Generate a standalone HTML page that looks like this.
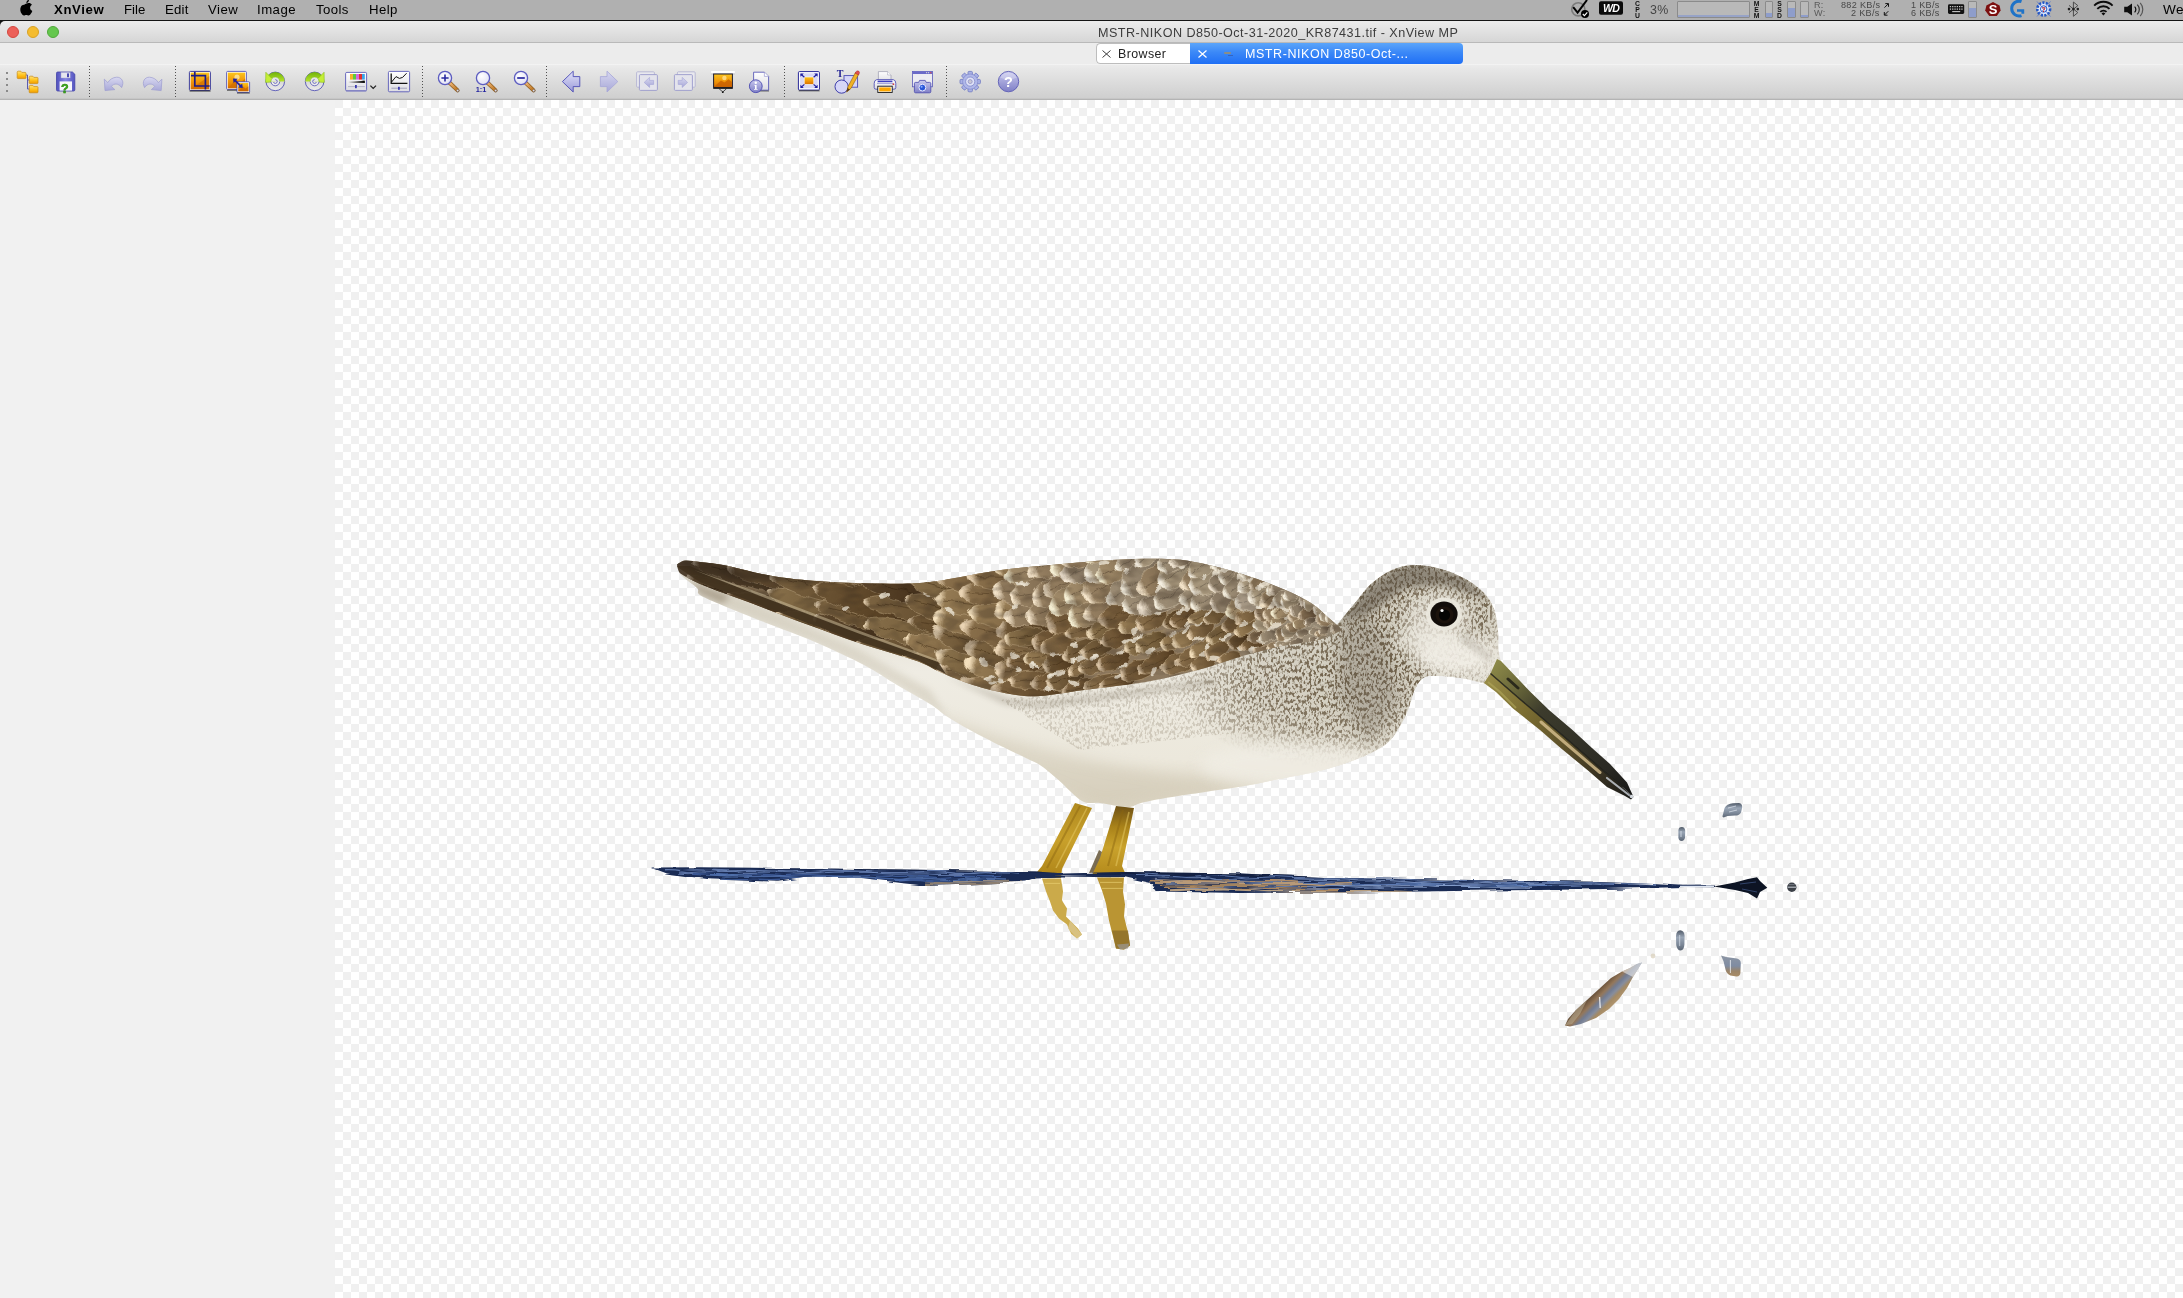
<!DOCTYPE html>
<html><head><meta charset="utf-8">
<style>
*{margin:0;padding:0;box-sizing:border-box}
html,body{width:2183px;height:1298px;overflow:hidden;background:#f1f1f1;font-family:"Liberation Sans",sans-serif;}
.abs{position:absolute}
#menubar{position:absolute;left:0;top:0;width:2183px;height:20px;background:#b0b0b0;}
#menuline{position:absolute;left:0;top:20px;width:2183px;height:1.3px;background:#141414;}
.mi,.st,.vt,#title,#tb1,#tb2,#pct{will-change:transform}
.mi{position:absolute;top:0.5px;height:18px;line-height:18px;font-size:13.2px;color:#000;white-space:nowrap;}
.st{position:absolute;white-space:nowrap;color:#484848;font-size:9.1px;line-height:9px;height:9px;letter-spacing:.3px}
.vt{position:absolute;width:7px;text-align:center;font-size:6.8px;line-height:6px;font-weight:bold;color:#111}
.bar{position:absolute;top:0.5px;height:17px;border:1px solid #8b8b8b;background:#b9b9b9;border-radius:1px;overflow:hidden}
.bar i{position:absolute;left:0;right:0;bottom:0;background:#8e9dcb;display:block}
#titlebar{position:absolute;left:0;top:21px;width:2183px;height:22px;background:linear-gradient(#ececec,#d6d6d6);border-bottom:1px solid #b9b9b9;}
.tl{position:absolute;top:5px;width:12px;height:12px;border-radius:50%;}
#title{position:absolute;left:1098px;top:5.3px;height:14px;line-height:14px;font-size:12.6px;letter-spacing:.47px;color:#3c3c3c;white-space:nowrap;}
#tabrow{position:absolute;left:0;top:43px;width:2183px;height:21px;background:#ececec;}
#toolbar{position:absolute;left:0;top:64px;width:2183px;height:36px;background:linear-gradient(#f6f6f6 0,#ebebeb 1.5px,#e6e6e6 6px,#cfcfcf 34px,#b4b4b4 35.5px,#b0b0b0 36px);}
#left{position:absolute;left:0;top:100px;width:335px;height:1198px;background:#f1f1f1;}
#canvas{position:absolute;left:335px;top:100px;width:1848px;height:1198px;background-color:#fff;
 background-image:conic-gradient(#fff 25%,#f0f0f0 0 50%,#fff 0 75%,#f0f0f0 0);background-size:16px 16px;background-position:0 0;}
svg{position:absolute;left:0;top:0;overflow:visible}
</style></head><body>
<div id="menubar">
 <svg style="left:20px;top:0" width="14" height="17" viewBox="0 0 14 17"><path fill="#000" d="M9.0 0 C8.9 1.0 8.5 1.7 8.0 2.2 C7.5 2.7 6.9 3.0 6.3 2.9 C6.3 2.0 6.7 1.2 7.2 0.7 C7.5 0.4 7.9 0.15 8.3 0 Z M6.4 3.6 C7.0 3.6 7.8 3.0 8.9 3.0 C10.1 3.0 11.2 3.6 11.9 4.7 C10.6 5.5 10.1 6.6 10.1 7.8 C10.1 9.3 11.0 10.4 12.3 10.9 C12.0 11.9 11.5 12.9 10.8 13.8 C10.2 14.7 9.5 15.5 8.6 15.5 C7.7 15.5 7.4 14.9 6.3 14.9 C5.2 14.9 4.8 15.5 4.0 15.5 C3.1 15.6 2.4 14.7 1.7 13.8 C0.5 12.1 -0.3 9.2 0.8 6.9 C1.4 5.6 2.7 4.7 4.0 4.7 C5.0 4.7 5.9 3.6 6.4 3.6 Z"/></svg>
 <div class="mi" id="m0" style="left:54px;font-weight:bold;letter-spacing:.62px">XnView</div>
 <div class="mi" id="m1" style="left:124px;letter-spacing:.03px">File</div>
 <div class="mi" id="m2" style="left:165px;letter-spacing:.24px">Edit</div>
 <div class="mi" id="m3" style="left:208px;letter-spacing:.46px">View</div>
 <div class="mi" id="m4" style="left:257px;letter-spacing:.47px">Image</div>
 <div class="mi" id="m5" style="left:316px;letter-spacing:.4px">Tools</div>
 <div class="mi" id="m6" style="left:368.5px;letter-spacing:.44px">Help</div>
 <div class="mi" id="m7" style="left:2162.5px;font-size:13.6px;letter-spacing:.3px">We</div>
 <!-- status items -->
 <svg width="2183" height="20" viewBox="0 0 2183 20">
  <circle cx="1578.3" cy="9.3" r="6.6" fill="none" stroke="#7b7b7b" stroke-width="1.6"/>
  <path d="M1573.2 7.2 L1577.6 12.6 L1587 0" fill="none" stroke="#000" stroke-width="2"/>
  <circle cx="1585" cy="14" r="4" fill="#000"/><path d="M1582.8 14 L1584.4 15.7 L1587.3 12.3" fill="none" stroke="#fff" stroke-width="1.1"/>
  <rect x="1599" y="1.2" width="24" height="13.5" rx="2" fill="#0b0b0b"/>
  <text x="1611" y="11.8" font-size="10.5" font-weight="bold" font-style="italic" fill="#fff" text-anchor="middle" font-family="Liberation Sans" letter-spacing="-0.8">WD</text>
  <!-- keyboard -->
  <rect x="1948" y="4.2" width="16.2" height="9.8" rx="1.4" fill="#111"/>
  <path d="M1949.8 6.6h12.8M1949.8 9.1h12.8" stroke="#c8c8c8" stroke-width="1.1" stroke-dasharray="1.3 1"/>
  <path d="M1952.2 11.6h8" stroke="#c8c8c8" stroke-width="1.1"/>
  <!-- S hex -->
  <path d="M1993 2 L1999.6 5.6 L2000.6 10.5 L1996.8 16 L1989.2 16 L1985.2 10.5 L1986.4 5.6 Z" fill="#7c0f0f"/>
  <text x="1993" y="14" font-size="13" font-weight="bold" fill="#fff" text-anchor="middle" font-family="Liberation Sans">S</text>
  <!-- G -->
  <path d="M2021.5 1.6 A7.4 7.4 0 1 0 2021.5 15.6" fill="none" stroke="#1e73c8" stroke-width="3"/>
  <path d="M2017 9.2 H2024.2 V13.8 H2021.4 V11.8 H2017 Z" fill="#1e73c8"/>
  <!-- gear blue -->
  <circle cx="2043.7" cy="9" r="6.4" fill="#dfe8fb" stroke="#2457c5" stroke-width="2.6" stroke-dasharray="2.2 1.3"/>
  <circle cx="2043.7" cy="9" r="3.2" fill="#fff" stroke="#2457c5" stroke-width="1"/>
  <path d="M2037 1.5 L2050.5 16.5 M2050.5 1.5 L2037 16.5" stroke="#4a6fd0" stroke-width=".7"/>
  <text x="2043.7" y="11.6" font-size="7" font-weight="bold" fill="#c22" text-anchor="middle" font-family="Liberation Sans">?</text>
  <!-- bluetooth -->
  <path d="M2069 5.4 L2077.8 12.6 L2073.4 16.3 L2073.4 2 L2077.8 5.6 L2069 12.8" fill="none" stroke="#4c4c4c" stroke-width="1"/>
  <circle cx="2069" cy="9.1" r="1.3" fill="#222"/><circle cx="2073.4" cy="9.1" r="1.3" fill="#222"/><circle cx="2077.8" cy="9.1" r="1.3" fill="#222"/>
  <!-- wifi -->
  <g fill="none" stroke="#0c0c0c" stroke-width="1.9">
   <path d="M2094.2 5.6 A13 13 0 0 1 2112.6 5.6"/>
   <path d="M2097.3 8.8 A8.6 8.6 0 0 1 2109.5 8.8"/>
   <path d="M2100.3 11.9 A4.3 4.3 0 0 1 2106.5 11.9"/>
  </g>
  <path d="M2103.4 15.6 L2101.5 13.4 A2.8 2.8 0 0 1 2105.3 13.4 Z" fill="#0c0c0c"/>
  <!-- volume -->
  <path d="M2124.2 6.8 H2127.3 L2132 3.4 V15.6 L2127.3 12.2 H2124.2 Z" fill="#0c0c0c"/>
  <g fill="none" stroke="#0c0c0c" stroke-width="1.2"><path d="M2134.6 6.6 A4 4 0 0 1 2134.6 12.4"/><path d="M2137.3 4.6 A7 7 0 0 1 2137.3 14.4" stroke="#333"/><path d="M2140.2 2.8 A10 10 0 0 1 2140.2 16.2" stroke="#555"/></g>
  <!-- arrows -->
  <path d="M1884.5 7.6 L1888.3 3.8 M1885.3 3.6 H1888.5 V6.8" fill="none" stroke="#111" stroke-width="1"/>
  <path d="M1888.3 11.2 L1884.5 15 M1884.3 12 V15.2 H1887.5" fill="none" stroke="#111" stroke-width="1"/>
 </svg>
 <div class="vt" style="left:1634px;top:1px">C<br>P<br>U</div>
 <div class="vt" style="left:1753px;top:1px">M<br>E<br>M</div>
 <div class="vt" style="left:1776px;top:1px">S<br>S<br>D</div>
 <div class="abs" id="pct" style="left:1650px;top:3px;font-size:12.4px;line-height:15px;color:#444;letter-spacing:.4px">3%</div>
 <div class="bar" style="left:1677px;width:73px"><i style="height:2px;opacity:.8"></i></div>
 <div class="bar" style="left:1764.5px;width:8.5px"><i style="height:4px"></i></div>
 <div class="bar" style="left:1787.3px;width:8.5px"><i style="height:9px"></i></div>
 <div class="bar" style="left:1800.4px;width:8.5px"><i style="height:1.5px"></i></div>
 <div class="bar" style="left:1968.4px;width:8.5px"><i style="height:9px"></i></div>
 <div class="st" style="left:1813.5px;top:0.5px;color:#5a5a5a">R:</div>
 <div class="st" style="left:1813.5px;top:9px;color:#5a5a5a">W:</div>
 <div class="st" style="right:303px;top:0.5px">882 KB/s</div>
 <div class="st" style="right:303px;top:9px">2 KB/s</div>
 <div class="st" style="right:243.5px;top:0.5px">1 KB/s</div>
 <div class="st" style="right:243.5px;top:9px">6 KB/s</div>
</div>
<div id="menuline"></div>
<div class="abs" style="left:0;top:20px;width:6px;height:6px;background:#141414"></div>
<div id="titlebar" style="border-top-left-radius:5px">
 <div class="tl" style="left:7px;background:#ec6059;border:0.6px solid #d4483f"></div>
 <div class="tl" style="left:27px;background:#f4bc30;border:0.6px solid #d9a224"></div>
 <div class="tl" style="left:47px;background:#65c74e;border:0.6px solid #50a83a"></div>
 <div id="title">MSTR-NIKON D850-Oct-31-2020_KR87431.tif - XnView MP</div>
</div>
<div id="tabrow">
 <div class="abs" id="tab1" style="left:1095.5px;top:0px;width:95px;height:21px;background:#fff;border:1px solid #bdbdbd;border-right:none;border-radius:4.5px 0 0 4.5px"></div>
 <div class="abs" id="tab2" style="left:1190px;top:-0.4px;width:273px;height:21.4px;background:linear-gradient(#5ba5fa,#3b88f7 45%,#1f6ff5);border-radius:0 4px 4px 0"></div>
 <svg style="left:1101.5px;top:7px" width="9" height="8" viewBox="0 0 9 8"><path d="M0.5 0.5L8.5 7.5M8.5 0.5L0.5 7.5" stroke="#3a3a3a" stroke-width="1" fill="none"/></svg>
 <div class="abs" id="tb1" style="left:1117.5px;top:4.2px;height:15px;line-height:15px;font-size:12.4px;letter-spacing:.42px;color:#222;white-space:nowrap">Browser</div>
 <svg style="left:1197.7px;top:7px" width="9" height="8" viewBox="0 0 9 8"><path d="M0.5 0.5L8.5 7.5M8.5 0.5L0.5 7.5" stroke="#fff" stroke-width="1.2" fill="none"/></svg>
 <div class="abs" style="left:1223.5px;top:8.5px;width:7px;height:2.6px;background:#9a8f72;border-radius:1.3px;opacity:.85"></div>
 <div class="abs" style="left:1227.5px;top:11.5px;width:5px;height:1px;background:#3559a8;opacity:.7"></div>
 <div class="abs" id="tb2" style="left:1245px;top:4.2px;height:15px;line-height:15px;font-size:12.5px;letter-spacing:.56px;color:#fff;white-space:nowrap">MSTR-NIKON D850-Oct-...</div>
</div>
<div id="toolbar"></div>
<div id="left"></div>
<div id="canvas"></div>
<svg id="icons" width="2183" height="100" viewBox="0 0 2183 100">
<defs>
 <linearGradient id="gOr" x1="0" y1="0" x2="0" y2="1"><stop offset="0" stop-color="#fbc51d"/><stop offset=".5" stop-color="#f29a0a"/><stop offset="1" stop-color="#d96f00"/></linearGradient>
 <linearGradient id="gFold" x1="0" y1="0" x2="0" y2="1"><stop offset="0" stop-color="#ffe27a"/><stop offset=".55" stop-color="#ffc21a"/><stop offset="1" stop-color="#f09a00"/></linearGradient>
 <linearGradient id="gLav" x1="0" y1="0" x2="0" y2="1"><stop offset="0" stop-color="#e3e3fa"/><stop offset="1" stop-color="#9a9ad8"/></linearGradient>
 <linearGradient id="gLavD" x1="0" y1="0" x2="0" y2="1"><stop offset="0" stop-color="#c9c9ee"/><stop offset="1" stop-color="#7f7fc6"/></linearGradient>
 <linearGradient id="gLavL" x1="0" y1="0" x2="0" y2="1"><stop offset="0" stop-color="#d8d8f0"/><stop offset="1" stop-color="#a8a8d8"/></linearGradient>
 <linearGradient id="gGrn" x1="0" y1="0" x2="0" y2="1"><stop offset="0" stop-color="#6fb20a"/><stop offset="1" stop-color="#b6e32a"/></linearGradient>
 <linearGradient id="gGray" x1="0" y1="0" x2="0" y2="1"><stop offset="0" stop-color="#c4c4c4"/><stop offset="1" stop-color="#ececec"/></linearGradient>
 <linearGradient id="gPaper" x1="0" y1="0" x2="0" y2="1"><stop offset="0" stop-color="#ffffff"/><stop offset="1" stop-color="#dcdce2"/></linearGradient>
 <linearGradient id="gHandle" x1="0" y1="0" x2="1" y2="1"><stop offset="0" stop-color="#f0b878"/><stop offset="1" stop-color="#b8701c"/></linearGradient>
 <radialGradient id="gLens" cx=".4" cy=".35" r=".7"><stop offset="0" stop-color="#ffffff"/><stop offset="1" stop-color="#dfe0f4"/></radialGradient>
 <linearGradient id="gFlop" x1="0" y1="0" x2="1" y2="0"><stop offset="0" stop-color="#5151bd"/><stop offset=".5" stop-color="#8787e4"/><stop offset="1" stop-color="#5555c0"/></linearGradient>
 <linearGradient id="gBW" x1="0" y1="0" x2="1" y2="0"><stop offset="0" stop-color="#e8e8e8"/><stop offset="1" stop-color="#000"/></linearGradient>
 <g id="folder"><path d="M0 1.2 Q0 0 1 0 H3.6 L4.6 1.2 H8 Q8.8 1.2 8.8 2 V6.6 Q8.8 7.4 8 7.4 H0.8 Q0 7.4 0 6.6 Z" fill="url(#gFold)" stroke="#c98a10" stroke-width=".7"/></g>
 <g id="mag"><path d="M4.6 4.8 L12.6 12.4" stroke="#8a5a1e" stroke-width="4" stroke-linecap="round"/><path d="M4.6 4.8 L12.4 12.2" stroke="url(#gHandle)" stroke-width="2.6" stroke-linecap="round"/><circle cx="12.7" cy="12.6" r="1.1" fill="#e8e8f0" stroke="#667" stroke-width=".5"/><circle cx="0" cy="0" r="6.6" fill="url(#gLens)" stroke="#5c5cc0" stroke-width="1.3"/></g>
</defs>
<!-- handle -->
<g fill="#8a8a8a"><rect x="6" y="72" width="2" height="2"/><rect x="6" y="78" width="2" height="2"/><rect x="6" y="84" width="2" height="2"/><rect x="6" y="90" width="2" height="2"/></g>
<!-- separators -->
<g stroke="#505050" stroke-width="1" stroke-dasharray="1 2" fill="none">
 <path d="M89.5 66V97"/><path d="M175.5 66V97"/><path d="M422.5 66V97"/><path d="M546.5 66V97"/><path d="M784.5 66V97"/><path d="M946.5 66V97"/>
</g>
<!-- 1 folder tree -->
<path d="M25.5 75 H27.5 V89 H29.5 M27.5 80 H29.5" fill="none" stroke="#5a5ab0" stroke-width="1"/>
<use href="#folder" x="17.2" y="71.2"/><use href="#folder" x="29.2" y="76.2"/><use href="#folder" x="29.2" y="85.4"/>
<!-- 2 floppy save? -->
<path d="M56.5 73.2 Q56.5 72 57.7 72 H72.4 L74.8 74.2 V89.8 Q74.8 91 73.6 91 H57.7 Q56.5 91 56.5 89.8 Z" fill="url(#gFlop)" stroke="#4343a8" stroke-width=".8"/>
<rect x="61" y="72.4" width="9.2" height="5.6" fill="#e6e6ee" stroke="#9a9ac8" stroke-width=".4"/><rect x="67" y="73.4" width="2" height="3.8" fill="#4a4ab0"/>
<rect x="59.6" y="81.4" width="12.4" height="9.2" fill="#f6f6fa"/>
<text x="64.8" y="92.6" font-size="12.5" font-weight="bold" fill="#3fb61a" stroke="#1f7a08" stroke-width=".5" text-anchor="middle" font-family="Liberation Sans">?</text>
<!-- 3 undo 4 redo (disabled) -->
<path id="undo" d="M104.3 79.2 L105 90.6 L114.8 89.6 L111.4 86.4 C113.8 83.2 118.6 83 121.6 87.6 C124.8 81.6 121.4 77 116.6 77.2 C112.8 77.4 109.6 79.6 107.8 82.6 Z" fill="url(#gLavL)" stroke="#9c9cd0" stroke-width=".7"/>
<use href="#undo" transform="translate(266.2 0) scale(-1 1)"/>
<!-- 5 crop -->
<rect x="189.4" y="71.4" width="21" height="19" rx="1" fill="#fff" stroke="#2a2a90" stroke-width=".9"/>
<rect x="190.6" y="72.6" width="18.6" height="16.6" fill="url(#gOr)"/>
<path d="M190.6 89.2 L209.2 76 V89.2 Z" fill="#c96800" opacity=".55"/>
<path d="M194.8 71.8 V86 H209.6 M191 75.6 H205.4 V89.6" fill="none" stroke="#1c1c88" stroke-width="1.7"/>
<path d="M189.6 91 H210.6" stroke="#111" stroke-width="1" opacity=".8"/>
<!-- 6 resize -->
<rect x="226.6" y="71.4" width="19.8" height="18" rx="1" fill="#fff" stroke="#5454b8" stroke-width=".9"/>
<rect x="227.8" y="72.6" width="17.4" height="15.6" fill="url(#gOr)"/>
<circle cx="237" cy="77" r="2.6" fill="#ffe9a8" opacity=".8"/>
<path d="M227.8 88.2 L236 79.5 L240 83 L245.2 78.6 V88.2 Z" fill="#d06c00" opacity=".7"/>
<path d="M227 90.2 H238" stroke="#111" stroke-width="1" opacity=".7"/>
<rect x="237" y="81.8" width="12.6" height="10.6" rx=".8" fill="#fff" stroke="#3c3ca8" stroke-width=".8"/>
<rect x="238.2" y="83" width="10.2" height="8.2" fill="url(#gOr)"/><path d="M238.2 91.2 L243 86.6 L245.6 88.6 L248.4 86.2 V91.2Z" fill="#c96500" opacity=".7"/>
<path d="M237 93 H249.8" stroke="#111" stroke-width=".9" opacity=".8"/>
<path d="M234.2 79.6 L241.6 86.8" stroke="#2222a0" stroke-width="1.8"/><path d="M233 78.4 L237.6 78.8 L233.6 83 Z M242.8 88 L238.2 87.6 L242.2 83.4 Z" fill="#2222a0"/>
<!-- 7 rotate ccw / 8 rotate cw -->
<g id="rot">
 <circle cx="275.3" cy="81.4" r="9.3" fill="url(#gGray)" stroke="#5353b4" stroke-width=".9"/>
 <path d="M266 81.4 A9.3 9.3 0 0 1 284.6 81.4 H279.7 A4.4 4.4 0 0 0 270.9 81.4 Z" fill="url(#gGrn)"/>
 <path d="M265.8 72.2 L265.6 82.4 L275.4 81.8 L271.6 78.2 Z" fill="#c4ee36" stroke="#7db40c" stroke-width=".5"/>
 <path d="M270.9 81.4 A4.4 4.4 0 0 0 279.7 81.4" fill="#ececec" stroke="#5353b4" stroke-width=".8"/>
 <path d="M270.9 81.4 A4.4 4.4 0 0 1 279.7 81.4" fill="#e6e6e6" stroke="#7cbf10" stroke-width=".6"/>
 <path d="M275.3 79.6 A1.9 1.9 0 1 1 273.5 82" fill="none" stroke="#5353b4" stroke-width=".8"/>
</g>
<use href="#rot" transform="translate(589.9 0) scale(-1 1)"/>
<!-- 9 color adjust -->
<rect x="345.6" y="72.4" width="21" height="18.4" rx="1.2" fill="url(#gPaper)" stroke="#5a5ab8" stroke-width=".9"/>
<rect x="350" y="74" width="3" height="5.6" fill="#f5b52a"/><rect x="353" y="74" width="3" height="5.6" fill="#5ccb3c"/><rect x="356" y="74" width="3" height="5.6" fill="#d668e0"/><rect x="359" y="74" width="3" height="5.6" fill="#e03030"/><rect x="362" y="74" width="2.8" height="5.6" fill="#3aa6e8"/>
<path d="M348.6 82.8 L364.6 80.6 V82.8 Z" fill="#000"/><rect x="348.6" y="81.2" width="16.2" height="1.8" fill="url(#gBW)" opacity=".9"/>
<path d="M348 86.6 H364.8" stroke="#b0b0c4" stroke-width=".9"/><rect x="355" y="85" width="1.8" height="3.2" fill="#3a3ab0"/>
<path d="M346 91.2 H366.4" stroke="#7a7ac0" stroke-width=".8" opacity=".7"/>
<path d="M370.4 85.6 L373.2 88.4 L376 85.6" fill="none" stroke="#222" stroke-width="1.3"/>
<!-- 10 curves -->
<rect x="388.4" y="71.4" width="21.2" height="20.4" rx="1.2" fill="url(#gPaper)" stroke="#5a5ab8" stroke-width=".9"/>
<path d="M391.2 73.4 V83.4 H407.4" fill="none" stroke="#111" stroke-width="1.3"/>
<path d="M391.6 82 L396 76.6 L399.4 78.4 L402.6 77.4 L406.6 73.2" fill="none" stroke="#111" stroke-width="1"/>
<path d="M391.4 88.2 H407" stroke="#9a9ab8" stroke-width=".9"/><rect x="398" y="86.8" width="1.8" height="3" fill="#3a3ab0"/>
<!-- 11-13 zoom -->
<use href="#mag" x="445" y="78"/><path d="M441.4 78 H448.6 M445 74.4 V81.6" stroke="#2828a0" stroke-width="1.6"/>
<use href="#mag" x="483" y="78"/><text x="481" y="92" font-size="7.4" font-weight="bold" fill="#2424a0" text-anchor="middle" font-family="Liberation Sans">1:1</text>
<use href="#mag" x="521" y="78"/><path d="M517.2 78 H524.8" stroke="#2828a0" stroke-width="1.7"/>
<!-- 14 back / 15 fwd -->
<path d="M562.4 81.6 L573.2 71.2 V76.6 H579.8 V86.6 H573.2 V92 Z" fill="url(#gLav)" stroke="#4c4cb4" stroke-width=".9" stroke-linejoin="round"/>
<path d="M617.8 81.6 L607 71.2 V76.6 H600.4 V86.6 H607 V92 Z" fill="url(#gLavL)" stroke="#a6a6d8" stroke-width=".8" stroke-linejoin="round"/>
<!-- 16 prev file 17 next file (disabled) -->
<rect x="636.6" y="71.8" width="17.8" height="15.4" rx="1" fill="#e9e9ee" stroke="#aeaed0" stroke-width=".8"/>
<rect x="639.4" y="74.6" width="18" height="15.8" rx="1" fill="#e4e4ec" stroke="#9a9acc" stroke-width=".9"/>
<path d="M644.2 82.4 L649.6 77.4 V80.4 H653.6 V84.4 H649.6 V87.4 Z" fill="url(#gLavL)" stroke="#a2a2d6" stroke-width=".6"/>
<rect x="677.4" y="71.8" width="17.8" height="15.4" rx="1" fill="#e9e9ee" stroke="#aeaed0" stroke-width=".8"/>
<rect x="674.4" y="74.6" width="18" height="15.8" rx="1" fill="#e4e4ec" stroke="#9a9acc" stroke-width=".9"/>
<path d="M687.6 82.4 L682.2 77.4 V80.4 H678.2 V84.4 H682.2 V87.4 Z" fill="url(#gLavL)" stroke="#a2a2d6" stroke-width=".6"/>
<!-- 18 slideshow -->
<rect x="711.2" y="71" width="23.6" height="2.8" fill="#fff"/><path d="M711.2 73.9H734.8" stroke="#8c8c96" stroke-width=".5"/>
<rect x="713.6" y="74" width="18.8" height="13.4" fill="url(#gOr)" stroke="#1c1c30" stroke-width="1"/>
<circle cx="724.4" cy="78" r="2.2" fill="#ffe6a0" opacity=".75"/>
<path d="M714.2 86.8 L721 80.6 L724.4 82.6 L728.6 79.2 L731.8 82 V86.8 Z" fill="#c85f00" opacity=".8"/>
<path d="M713.2 88.2 H732.8" stroke="#111" stroke-width="1.3"/>
<path d="M719 88.6 L722.8 92 L726.6 88.6" fill="none" stroke="#222" stroke-width=".8"/><circle cx="722.8" cy="92.2" r=".9" fill="#111"/>
<!-- 19 properties -->
<path d="M753.6 72.2 H764.4 L768.6 76.4 V90.2 H753.6 Z" fill="url(#gPaper)" stroke="#5a5ab8" stroke-width=".9"/>
<path d="M764.4 72.2 V76.4 H768.6" fill="#fff" stroke="#8a8ac8" stroke-width=".6"/>
<path d="M754 91 H769" stroke="#111" stroke-width=".8" opacity=".7"/>
<circle cx="755.8" cy="86.2" r="6.4" fill="url(#gLavD)" stroke="#4a4ab0" stroke-width=".9"/>
<circle cx="755.8" cy="82.8" r="1.2" fill="#fff"/><path d="M754.4 85 H756.6 V89 H757.6 V89.8 H754 V89 H755 V85.8 H754.4Z" fill="#fff"/>
<!-- 20 fullscreen -->
<rect x="798.4" y="71.6" width="21" height="18.4" rx="1" fill="#d9d9f6" stroke="#2a2a98" stroke-width="1"/>
<rect x="799.6" y="72.8" width="18.6" height="16" fill="none" stroke="#fff" stroke-width="1"/>
<path d="M798.8 90.8 H819.6" stroke="#111" stroke-width=".9" opacity=".8"/>
<rect x="804.2" y="77" width="9.6" height="7.4" fill="url(#gOr)" stroke="#fff" stroke-width=".6"/>
<g stroke="#2020a0" stroke-width="1.2" fill="#2020a0"><path d="M801 74.2 L804.4 77.2 M817 74.2 L813.6 77.2 M801 87.4 L804.4 84.4 M817 87.4 L813.6 84.4"/><path d="M800.4 73.6 h3.4 l-3.4 3.2z M817.6 73.6 h-3.4 l3.4 3.2z M800.4 88 h3.4 l-3.4 -3.2z M817.6 88 h-3.4 l3.4 -3.2z" stroke="none"/></g>
<!-- 21 draw -->
<text x="840.2" y="77.4" font-size="10" font-weight="bold" fill="#1e1e90" text-anchor="middle" font-family="Liberation Serif">T</text>
<rect x="844" y="75.6" width="13.6" height="11.6" fill="#d6d6f8" stroke="#4a4ab4" stroke-width=".9"/>
<circle cx="841.6" cy="86.6" r="6.6" fill="#d6d6f8" stroke="#2e2ea4" stroke-width=".9"/>
<path d="M846.6 92 L848 86.6 L855.4 72.6 L858.6 74.4 L851 88.4 Z" fill="#f0b226" stroke="#8a5a10" stroke-width=".6"/>
<path d="M846.6 92 L847.4 88 L850 89.6 Z" fill="#5a3a1a"/>
<path d="M855 73.2 Q856.6 69.8 858.6 71 Q860.4 72.2 858.6 75 Z" fill="#e05050" stroke="#a02020" stroke-width=".4"/>
<!-- 22 print -->
<path d="M878.4 71.6 H887.6 L891 75 V82 H878.4 Z" fill="url(#gPaper)" stroke="#8a8aa0" stroke-width=".6"/>
<path d="M887.6 71.6 V75 H891" fill="#fff" stroke="#9a9ab0" stroke-width=".5"/>
<path d="M876.8 79.6 Q874.2 80 874.2 83.4 V87.6 Q874.2 89.2 876 89.2 H894 Q895.8 89.2 895.8 87.6 V83.4 Q895.8 80 893.2 79.6 Z" fill="url(#gPaper)" stroke="#5050b4" stroke-width=".9"/>
<path d="M877.6 81.4 H892.4" stroke="#4040c0" stroke-width="1.6"/><path d="M877 83.4 H893" stroke="#8a8ad0" stroke-width=".8"/>
<circle cx="893.4" cy="84.2" r=".9" fill="#d04040"/>
<rect x="877.8" y="86.2" width="14.4" height="6.2" fill="#fff" stroke="#111" stroke-width=".9"/><rect x="879.2" y="87.4" width="11.6" height="4" fill="#ffa800"/>
<!-- 23 capture -->
<rect x="912.6" y="71.4" width="20" height="15.4" fill="#ececf2" stroke="#5a5ab8" stroke-width=".8"/>
<rect x="912.6" y="71.4" width="20" height="2.6" fill="#6a6ac8"/><circle cx="930.8" cy="72.7" r=".7" fill="#e05050"/><circle cx="928.6" cy="72.7" r=".6" fill="#ddd"/><circle cx="926.6" cy="72.7" r=".6" fill="#ddd"/>
<path d="M914.4 83.6 Q914.4 82.4 915.6 82.4 H918.6 L919.6 80.4 H925.2 L926.2 82.4 H929.6 Q930.8 82.4 930.8 83.6 V91.6 Q930.8 92.8 929.6 92.8 H915.6 Q914.4 92.8 914.4 91.6 Z" fill="url(#gLavD)" stroke="#4646ac" stroke-width=".8"/>
<circle cx="922.4" cy="87.6" r="3.4" fill="#2a56d8" stroke="#e8e8ff" stroke-width="1"/><circle cx="921.6" cy="86.8" r="1" fill="#8ab0ff"/>
<!-- 24 gear -->
<g transform="translate(970.2 81.6)">
 <g fill="#aab2e4" stroke="#6f78c2" stroke-width=".8"><g id="teeth"><rect x="-2.2" y="-10.2" width="4.4" height="5" rx="1"/><rect x="-2.2" y="5.2" width="4.4" height="5" rx="1"/></g><use href="#teeth" transform="rotate(45)"/><use href="#teeth" transform="rotate(90)"/><use href="#teeth" transform="rotate(135)"/></g>
 <circle r="7.6" fill="#b0b8e8" stroke="#7a82ca" stroke-width=".6"/><circle r="4.6" fill="#dfe2f6" stroke="#8088cc" stroke-width=".8"/><circle r="2" fill="#c8c8d4" stroke="#8a8ac4" stroke-width=".7"/>
</g>
<!-- 25 help -->
<circle cx="1008.5" cy="81.6" r="10.2" fill="url(#gLavD)" stroke="#5a5ab4" stroke-width=".9"/>
<path d="M1000.4 77.6 A9 9 0 0 1 1016.6 77.6 Q1008.5 82 1000.4 77.6Z" fill="#fff" opacity=".25"/>
<text x="1008.5" y="86.8" font-size="14.5" font-weight="bold" fill="#fff" text-anchor="middle" font-family="Liberation Sans">?</text>
</svg>
<svg id="bird" width="2183" height="1298" viewBox="0 0 2183 1298" style="color-interpolation-filters:sRGB">
<defs>
 <filter id="fFine" x="-2%" y="-5%" width="104%" height="110%">
  <feTurbulence type="fractalNoise" baseFrequency="0.42 0.26" numOctaves="2" seed="11" result="n"/>
  <feColorMatrix in="n" type="matrix" values="0 0 0 0 0.42  0 0 0 0 0.36  0 0 0 0 0.27  5.5 0 0 0 -2.55" result="m"/>
  <feComposite in="m" in2="SourceGraphic" operator="in"/>
 </filter>
 <filter id="fWingN" x="-2%" y="-5%" width="104%" height="110%">
  <feTurbulence type="fractalNoise" baseFrequency="0.05 0.11" numOctaves="2" seed="4" result="n"/>
  <feColorMatrix in="n" type="matrix" values="0 0 0 0 0.22  0 0 0 0 0.17  0 0 0 0 0.12  3.4 0 0 0 -1.5" result="m"/>
  <feComposite in="m" in2="SourceGraphic" operator="in"/>
 </filter>
 <filter id="fSoft" x="-20%" y="-20%" width="140%" height="140%"><feGaussianBlur stdDeviation="7"/></filter>
 <filter id="fSoft2" x="-20%" y="-20%" width="140%" height="140%"><feGaussianBlur stdDeviation="3"/></filter>
 <filter id="fRough" x="-2%" y="-5%" width="104%" height="110%"><feTurbulence type="fractalNoise" baseFrequency="0.09" numOctaves="2" seed="2" result="t"/><feDisplacementMap in="SourceGraphic" in2="t" scale="7" xChannelSelector="R" yChannelSelector="G"/></filter>
 <filter id="fRough2" x="-5%" y="-20%" width="110%" height="140%"><feTurbulence type="fractalNoise" baseFrequency="0.03 0.3" numOctaves="2" seed="9" result="t"/><feDisplacementMap in="SourceGraphic" in2="t" scale="5" xChannelSelector="R" yChannelSelector="G"/></filter>
 <radialGradient id="gBr" cx="1345" cy="678" r="172" gradientUnits="userSpaceOnUse" gradientTransform="translate(1345 678) scale(1 .54) translate(-1345 -678)"><stop offset="0" stop-color="#fff" stop-opacity="1"/><stop offset=".55" stop-color="#fff" stop-opacity=".8"/><stop offset="1" stop-color="#fff" stop-opacity="0"/></radialGradient>
 <radialGradient id="gHd" cx="1420" cy="605" r="95" gradientUnits="userSpaceOnUse"><stop offset="0" stop-color="#fff" stop-opacity="1"/><stop offset=".7" stop-color="#fff" stop-opacity=".9"/><stop offset="1" stop-color="#fff" stop-opacity="0"/></radialGradient>
 <filter id="fB1"><feGaussianBlur stdDeviation="0.6"/></filter>
 <linearGradient id="gBelly" x1="0" y1="560" x2="0" y2="810" gradientUnits="userSpaceOnUse"><stop offset="0" stop-color="#d9d4c6"/><stop offset=".45" stop-color="#efece3"/><stop offset=".8" stop-color="#ece8dc"/><stop offset="1" stop-color="#ddd6c4"/></linearGradient>
 <linearGradient id="gWing" x1="677" y1="0" x2="1340" y2="0" gradientUnits="userSpaceOnUse"><stop offset="0" stop-color="#4f4030"/><stop offset=".12" stop-color="#776247"/><stop offset=".45" stop-color="#8f7656"/><stop offset=".8" stop-color="#8c7a62"/><stop offset="1" stop-color="#9c907c"/></linearGradient>
 <mask id="mBreast" maskUnits="userSpaceOnUse" x="1050" y="520" width="480" height="320"><rect x="1050" y="520" width="480" height="320" fill="url(#gBr)"/><rect x="1300" y="520" width="230" height="200" fill="url(#gHd)"/></mask>
 <clipPath id="cBody"><path d="M677.0 564.5C677.0 564.5 681.2 560.9 685.0 560.5C688.8 560.1 693.7 561.2 700.0 562.0C706.3 562.8 710.5 562.6 723.0 565.0C735.5 567.4 757.0 573.7 775.0 576.5C793.0 579.3 810.7 580.8 831.0 582.0C851.3 583.2 880.5 583.7 897.0 583.7C913.5 583.7 920.3 583.0 930.0 582.0C939.7 581.0 943.2 580.0 955.0 578.0C966.8 576.0 984.2 572.2 1001.0 570.0C1017.8 567.8 1037.5 566.2 1056.0 564.5C1074.5 562.8 1093.5 560.9 1112.0 560.0C1130.5 559.1 1152.3 558.5 1167.0 559.0C1181.7 559.5 1187.5 560.5 1200.0 563.0C1212.5 565.5 1228.2 569.7 1242.0 574.0C1255.8 578.3 1271.5 584.2 1283.0 589.0C1294.5 593.8 1303.2 598.0 1311.0 603.0C1318.8 608.0 1325.7 615.3 1330.0 619.0C1334.3 622.7 1337.0 625.0 1337.0 625.0C1337.0 625.0 1349.3 609.8 1355.0 603.0C1360.7 596.2 1364.8 589.5 1371.0 584.0C1377.2 578.5 1384.8 573.2 1392.0 570.0C1399.2 566.8 1406.2 565.2 1414.0 565.0C1421.8 564.8 1430.8 566.3 1439.0 568.5C1447.2 570.7 1456.2 574.1 1463.5 578.0C1470.8 581.9 1477.9 586.8 1483.0 592.0C1488.1 597.2 1491.5 602.5 1494.0 609.0C1496.5 615.5 1497.2 624.2 1498.0 631.0C1498.8 637.8 1498.0 644.9 1498.5 650.0C1499.0 655.1 1501.0 661.5 1501.0 661.5C1501.0 661.5 1486.0 684.0 1486.0 684.0C1486.0 684.0 1471.2 679.8 1463.5 678.5C1455.8 677.2 1446.4 676.2 1440.0 676.0C1433.6 675.8 1429.1 675.0 1425.0 677.0C1420.9 679.0 1418.3 682.5 1415.5 688.0C1412.7 693.5 1410.8 703.3 1408.0 710.0C1405.2 716.7 1402.3 722.6 1399.0 728.0C1395.7 733.4 1392.8 738.3 1388.0 742.6C1383.2 746.9 1377.7 749.9 1370.0 753.6C1362.3 757.3 1351.2 761.5 1342.0 764.6C1332.8 767.7 1325.7 769.5 1315.0 772.0C1304.3 774.5 1290.2 776.9 1278.0 779.3C1265.8 781.7 1253.8 784.5 1241.6 786.6C1229.4 788.7 1217.3 790.2 1205.0 792.0C1192.7 793.8 1178.7 795.8 1168.0 797.6C1157.3 799.4 1147.7 801.4 1141.0 803.0C1134.3 804.6 1134.8 807.0 1128.0 807.0C1121.2 807.0 1107.7 804.0 1100.0 803.0C1092.3 802.0 1089.0 804.9 1082.0 801.0C1075.0 797.1 1065.0 785.5 1058.0 779.5C1051.0 773.5 1045.0 768.4 1040.0 765.0C1035.0 761.6 1034.5 762.2 1028.0 759.0C1021.5 755.8 1010.7 750.8 1001.0 746.0C991.3 741.2 979.0 734.9 970.0 730.0C961.0 725.1 953.7 720.8 947.0 716.5C940.3 712.2 938.3 709.2 930.0 704.0C921.7 698.8 908.0 691.5 897.0 685.0C886.0 678.5 877.7 672.2 864.0 665.0C850.3 657.8 831.5 649.1 815.0 642.0C798.5 634.9 780.2 628.5 765.0 622.5C749.8 616.5 734.8 610.6 724.0 606.0C713.2 601.4 704.5 598.0 700.0 595.0C695.5 592.0 700.2 591.3 697.0 588.0C693.8 584.7 684.3 578.9 681.0 575.0C677.7 571.1 677.0 564.5 677.0 564.5Z"/></clipPath>
 <clipPath id="cWing"><path d="M672.0 560.0C672.0 560.0 680.3 557.2 685.0 557.0C689.7 556.8 693.7 558.0 700.0 559.0C706.3 560.0 710.5 560.4 723.0 563.0C735.5 565.6 757.0 571.7 775.0 574.5C793.0 577.3 810.7 578.8 831.0 580.0C851.3 581.2 880.5 581.5 897.0 581.5C913.5 581.5 920.3 580.9 930.0 580.0C939.7 579.1 943.2 578.0 955.0 576.0C966.8 574.0 984.2 570.3 1001.0 568.0C1017.8 565.7 1037.5 563.8 1056.0 562.0C1074.5 560.2 1093.5 558.0 1112.0 557.0C1130.5 556.0 1152.3 555.5 1167.0 556.0C1181.7 556.5 1187.5 557.5 1200.0 560.0C1212.5 562.5 1228.2 566.7 1242.0 571.0C1255.8 575.3 1271.5 581.2 1283.0 586.0C1294.5 590.8 1303.2 594.8 1311.0 600.0C1318.8 605.2 1324.8 612.0 1330.0 617.0C1335.2 622.0 1342.0 630.0 1342.0 630.0C1342.0 630.0 1328.0 637.3 1318.0 640.0C1308.0 642.7 1294.0 643.5 1282.0 646.0C1270.0 648.5 1258.8 651.3 1246.0 655.0C1233.2 658.7 1217.7 664.3 1205.0 668.0C1192.3 671.7 1181.0 674.5 1170.0 677.0C1159.0 679.5 1153.3 680.8 1139.0 683.0C1124.7 685.2 1100.5 687.8 1084.0 690.0C1067.5 692.2 1052.3 695.3 1040.0 696.0C1027.7 696.7 1021.2 695.8 1010.0 694.0C998.8 692.2 984.7 688.7 973.0 685.0C961.3 681.3 949.3 676.0 940.0 672.0C930.7 668.0 930.0 665.7 917.0 661.0C904.0 656.3 880.5 650.2 862.0 644.0C843.5 637.8 824.5 630.8 806.0 624.0C787.5 617.2 768.7 609.7 751.0 603.0C733.3 596.3 712.5 589.5 700.0 584.0C687.5 578.5 680.7 574.0 676.0 570.0C671.3 566.0 672.0 560.0 672.0 560.0Z"/></clipPath>
</defs>
<g clip-path="url(#cBody)">
 <rect x="660" y="540" width="860" height="280" fill="url(#gBelly)"/>
 <!-- underside shading -->
 <path d="M900 700 Q1000 770 1100 808 L1180 800 L1290 780 Q1100 784 900 700Z" fill="#c9c0aa" opacity=".45" filter="url(#fSoft)"/>
 <path d="M697 588 L724 606 L815 642 L897 685 L947 716 L930 690 L860 650 L780 615 L720 592Z" fill="#c9c2b0" opacity=".45" filter="url(#fSoft2)"/><path d="M690 580 L730 596 L722 604 L698 594Z" fill="#8a7a64" opacity=".5" filter="url(#fSoft2)"/>
 <!-- breast/neck/head gray base -->
 <g mask="url(#mBreast)">
  <rect x="1050" y="520" width="480" height="320" fill="#cbc5b7" opacity=".8"/>
  <g filter="url(#fFine)"><rect x="1050" y="520" width="480" height="320" fill="#000"/></g>
 </g>
 <!-- flank light mottling under wing -->
 <g filter="url(#fFine)" opacity=".22"><path d="M1000 700 L1250 665 L1260 730 L1080 750Z" fill="#000"/></g>
 <!-- crown darker -->
 <path d="M1340 622 L1368 586 L1395 568 L1420 562 L1462 575 L1490 600 L1445 586 L1405 588 L1372 612 Z" fill="#5e5548" opacity=".55" filter="url(#fSoft2)"/>
 <!-- hind neck darker -->
 <path d="M1338 628 L1360 600 L1385 640 L1400 700 L1370 745 L1340 700Z" fill="#6b6254" opacity=".3" filter="url(#fSoft)"/>
 <!-- face/throat whitish -->
 <ellipse cx="1455" cy="655" rx="40" ry="22" fill="#f3f0e8" opacity=".9" filter="url(#fSoft)"/>
 <ellipse cx="1425" cy="640" rx="30" ry="16" fill="#efece3" opacity=".7" filter="url(#fSoft)"/>
 <ellipse cx="1438" cy="616" rx="34" ry="24" fill="#f1eee6" opacity=".55" filter="url(#fSoft)"/>
 <path d="M1464 634 L1492 657 L1489 661 L1461 640Z" fill="#6a6050" opacity=".28" filter="url(#fSoft2)"/>
 <!-- lower breast white -->
 <ellipse cx="1290" cy="765" rx="90" ry="22" fill="#f0ede4" opacity=".8" filter="url(#fSoft)"/>
 <!-- wing -->
 <g clip-path="url(#cWing)">
  <rect x="660" y="540" width="700" height="180" fill="url(#gWing)"/>
  <g filter="url(#fRough)">
<defs><linearGradient id="f000"><stop offset="0" stop-color="#aa9c8c"/><stop offset="0.012" stop-color="#aa9c8c"/><stop offset="0.05" stop-color="#483622"/><stop offset="1" stop-color="#221204"/></linearGradient><linearGradient id="f001"><stop offset="0" stop-color="#aa9c8c"/><stop offset="0.045" stop-color="#aa9c8c"/><stop offset="0.15" stop-color="#483622"/><stop offset="1" stop-color="#221204"/></linearGradient><linearGradient id="f002"><stop offset="0" stop-color="#aa9c8c"/><stop offset="0.06" stop-color="#aa9c8c"/><stop offset="0.2" stop-color="#483622"/><stop offset="1" stop-color="#221204"/></linearGradient><linearGradient id="f010"><stop offset="0" stop-color="#b8aa98"/><stop offset="0.012" stop-color="#b8aa98"/><stop offset="0.05" stop-color="#56442e"/><stop offset="1" stop-color="#302010"/></linearGradient><linearGradient id="f011"><stop offset="0" stop-color="#b8aa98"/><stop offset="0.045" stop-color="#b8aa98"/><stop offset="0.15" stop-color="#56442e"/><stop offset="1" stop-color="#302010"/></linearGradient><linearGradient id="f012"><stop offset="0" stop-color="#b8aa98"/><stop offset="0.06" stop-color="#b8aa98"/><stop offset="0.2" stop-color="#56442e"/><stop offset="1" stop-color="#302010"/></linearGradient><linearGradient id="f020"><stop offset="0" stop-color="#c4b6a1"/><stop offset="0.012" stop-color="#c4b6a1"/><stop offset="0.05" stop-color="#625037"/><stop offset="1" stop-color="#3c2c19"/></linearGradient><linearGradient id="f021"><stop offset="0" stop-color="#c4b6a1"/><stop offset="0.045" stop-color="#c4b6a1"/><stop offset="0.15" stop-color="#625037"/><stop offset="1" stop-color="#3c2c19"/></linearGradient><linearGradient id="f022"><stop offset="0" stop-color="#c4b6a1"/><stop offset="0.06" stop-color="#c4b6a1"/><stop offset="0.2" stop-color="#625037"/><stop offset="1" stop-color="#3c2c19"/></linearGradient><linearGradient id="f100"><stop offset="0" stop-color="#beac96"/><stop offset="0.012" stop-color="#beac96"/><stop offset="0.05" stop-color="#5c462c"/><stop offset="1" stop-color="#36220e"/></linearGradient><linearGradient id="f101"><stop offset="0" stop-color="#beac96"/><stop offset="0.045" stop-color="#beac96"/><stop offset="0.15" stop-color="#5c462c"/><stop offset="1" stop-color="#36220e"/></linearGradient><linearGradient id="f102"><stop offset="0" stop-color="#beac96"/><stop offset="0.06" stop-color="#beac96"/><stop offset="0.2" stop-color="#5c462c"/><stop offset="1" stop-color="#36220e"/></linearGradient><linearGradient id="f110"><stop offset="0" stop-color="#ccbaa2"/><stop offset="0.012" stop-color="#ccbaa2"/><stop offset="0.05" stop-color="#6a5438"/><stop offset="1" stop-color="#44301a"/></linearGradient><linearGradient id="f111"><stop offset="0" stop-color="#ccbaa2"/><stop offset="0.045" stop-color="#ccbaa2"/><stop offset="0.15" stop-color="#6a5438"/><stop offset="1" stop-color="#44301a"/></linearGradient><linearGradient id="f112"><stop offset="0" stop-color="#ccbaa2"/><stop offset="0.06" stop-color="#ccbaa2"/><stop offset="0.2" stop-color="#6a5438"/><stop offset="1" stop-color="#44301a"/></linearGradient><linearGradient id="f120"><stop offset="0" stop-color="#d8c6ab"/><stop offset="0.012" stop-color="#d8c6ab"/><stop offset="0.05" stop-color="#766041"/><stop offset="1" stop-color="#503c23"/></linearGradient><linearGradient id="f121"><stop offset="0" stop-color="#d8c6ab"/><stop offset="0.045" stop-color="#d8c6ab"/><stop offset="0.15" stop-color="#766041"/><stop offset="1" stop-color="#503c23"/></linearGradient><linearGradient id="f122"><stop offset="0" stop-color="#d8c6ab"/><stop offset="0.06" stop-color="#d8c6ab"/><stop offset="0.2" stop-color="#766041"/><stop offset="1" stop-color="#503c23"/></linearGradient><linearGradient id="f200"><stop offset="0" stop-color="#ceba9e"/><stop offset="0.012" stop-color="#ceba9e"/><stop offset="0.05" stop-color="#6c5434"/><stop offset="1" stop-color="#463016"/></linearGradient><linearGradient id="f201"><stop offset="0" stop-color="#ceba9e"/><stop offset="0.045" stop-color="#ceba9e"/><stop offset="0.15" stop-color="#6c5434"/><stop offset="1" stop-color="#463016"/></linearGradient><linearGradient id="f202"><stop offset="0" stop-color="#ceba9e"/><stop offset="0.06" stop-color="#ceba9e"/><stop offset="0.2" stop-color="#6c5434"/><stop offset="1" stop-color="#463016"/></linearGradient><linearGradient id="f210"><stop offset="0" stop-color="#dcc8aa"/><stop offset="0.012" stop-color="#dcc8aa"/><stop offset="0.05" stop-color="#7a6240"/><stop offset="1" stop-color="#543e22"/></linearGradient><linearGradient id="f211"><stop offset="0" stop-color="#dcc8aa"/><stop offset="0.045" stop-color="#dcc8aa"/><stop offset="0.15" stop-color="#7a6240"/><stop offset="1" stop-color="#543e22"/></linearGradient><linearGradient id="f212"><stop offset="0" stop-color="#dcc8aa"/><stop offset="0.06" stop-color="#dcc8aa"/><stop offset="0.2" stop-color="#7a6240"/><stop offset="1" stop-color="#543e22"/></linearGradient><linearGradient id="f220"><stop offset="0" stop-color="#e8d4b3"/><stop offset="0.012" stop-color="#e8d4b3"/><stop offset="0.05" stop-color="#866e49"/><stop offset="1" stop-color="#604a2b"/></linearGradient><linearGradient id="f221"><stop offset="0" stop-color="#e8d4b3"/><stop offset="0.045" stop-color="#e8d4b3"/><stop offset="0.15" stop-color="#866e49"/><stop offset="1" stop-color="#604a2b"/></linearGradient><linearGradient id="f222"><stop offset="0" stop-color="#e8d4b3"/><stop offset="0.06" stop-color="#e8d4b3"/><stop offset="0.2" stop-color="#866e49"/><stop offset="1" stop-color="#604a2b"/></linearGradient><linearGradient id="f300"><stop offset="0" stop-color="#dcc6a8"/><stop offset="0.012" stop-color="#dcc6a8"/><stop offset="0.05" stop-color="#7a603e"/><stop offset="1" stop-color="#543c20"/></linearGradient><linearGradient id="f301"><stop offset="0" stop-color="#dcc6a8"/><stop offset="0.045" stop-color="#dcc6a8"/><stop offset="0.15" stop-color="#7a603e"/><stop offset="1" stop-color="#543c20"/></linearGradient><linearGradient id="f302"><stop offset="0" stop-color="#dcc6a8"/><stop offset="0.06" stop-color="#dcc6a8"/><stop offset="0.2" stop-color="#7a603e"/><stop offset="1" stop-color="#543c20"/></linearGradient><linearGradient id="f310"><stop offset="0" stop-color="#ead4b4"/><stop offset="0.012" stop-color="#ead4b4"/><stop offset="0.05" stop-color="#886e4a"/><stop offset="1" stop-color="#624a2c"/></linearGradient><linearGradient id="f311"><stop offset="0" stop-color="#ead4b4"/><stop offset="0.045" stop-color="#ead4b4"/><stop offset="0.15" stop-color="#886e4a"/><stop offset="1" stop-color="#624a2c"/></linearGradient><linearGradient id="f312"><stop offset="0" stop-color="#ead4b4"/><stop offset="0.06" stop-color="#ead4b4"/><stop offset="0.2" stop-color="#886e4a"/><stop offset="1" stop-color="#624a2c"/></linearGradient><linearGradient id="f320"><stop offset="0" stop-color="#f4e0bd"/><stop offset="0.012" stop-color="#f4e0bd"/><stop offset="0.05" stop-color="#947a53"/><stop offset="1" stop-color="#6e5635"/></linearGradient><linearGradient id="f321"><stop offset="0" stop-color="#f4e0bd"/><stop offset="0.045" stop-color="#f4e0bd"/><stop offset="0.15" stop-color="#947a53"/><stop offset="1" stop-color="#6e5635"/></linearGradient><linearGradient id="f322"><stop offset="0" stop-color="#f4e0bd"/><stop offset="0.06" stop-color="#f4e0bd"/><stop offset="0.2" stop-color="#947a53"/><stop offset="1" stop-color="#6e5635"/></linearGradient><linearGradient id="f400"><stop offset="0" stop-color="#e8d6be"/><stop offset="0.012" stop-color="#e8d6be"/><stop offset="0.05" stop-color="#867054"/><stop offset="1" stop-color="#604c36"/></linearGradient><linearGradient id="f401"><stop offset="0" stop-color="#e8d6be"/><stop offset="0.045" stop-color="#e8d6be"/><stop offset="0.15" stop-color="#867054"/><stop offset="1" stop-color="#604c36"/></linearGradient><linearGradient id="f402"><stop offset="0" stop-color="#e8d6be"/><stop offset="0.06" stop-color="#e8d6be"/><stop offset="0.2" stop-color="#867054"/><stop offset="1" stop-color="#604c36"/></linearGradient><linearGradient id="f410"><stop offset="0" stop-color="#f4e4ca"/><stop offset="0.012" stop-color="#f4e4ca"/><stop offset="0.05" stop-color="#947e60"/><stop offset="1" stop-color="#6e5a42"/></linearGradient><linearGradient id="f411"><stop offset="0" stop-color="#f4e4ca"/><stop offset="0.045" stop-color="#f4e4ca"/><stop offset="0.15" stop-color="#947e60"/><stop offset="1" stop-color="#6e5a42"/></linearGradient><linearGradient id="f412"><stop offset="0" stop-color="#f4e4ca"/><stop offset="0.06" stop-color="#f4e4ca"/><stop offset="0.2" stop-color="#947e60"/><stop offset="1" stop-color="#6e5a42"/></linearGradient><linearGradient id="f420"><stop offset="0" stop-color="#f4eed3"/><stop offset="0.012" stop-color="#f4eed3"/><stop offset="0.05" stop-color="#a08a69"/><stop offset="1" stop-color="#7a664b"/></linearGradient><linearGradient id="f421"><stop offset="0" stop-color="#f4eed3"/><stop offset="0.045" stop-color="#f4eed3"/><stop offset="0.15" stop-color="#a08a69"/><stop offset="1" stop-color="#7a664b"/></linearGradient><linearGradient id="f422"><stop offset="0" stop-color="#f4eed3"/><stop offset="0.06" stop-color="#f4eed3"/><stop offset="0.2" stop-color="#a08a69"/><stop offset="1" stop-color="#7a664b"/></linearGradient><linearGradient id="f500"><stop offset="0" stop-color="#f0e4d2"/><stop offset="0.012" stop-color="#f0e4d2"/><stop offset="0.05" stop-color="#8e7e68"/><stop offset="1" stop-color="#685a4a"/></linearGradient><linearGradient id="f501"><stop offset="0" stop-color="#f0e4d2"/><stop offset="0.045" stop-color="#f0e4d2"/><stop offset="0.15" stop-color="#8e7e68"/><stop offset="1" stop-color="#685a4a"/></linearGradient><linearGradient id="f502"><stop offset="0" stop-color="#f0e4d2"/><stop offset="0.06" stop-color="#f0e4d2"/><stop offset="0.2" stop-color="#8e7e68"/><stop offset="1" stop-color="#685a4a"/></linearGradient><linearGradient id="f510"><stop offset="0" stop-color="#f4eede"/><stop offset="0.012" stop-color="#f4eede"/><stop offset="0.05" stop-color="#9c8c74"/><stop offset="1" stop-color="#766856"/></linearGradient><linearGradient id="f511"><stop offset="0" stop-color="#f4eede"/><stop offset="0.045" stop-color="#f4eede"/><stop offset="0.15" stop-color="#9c8c74"/><stop offset="1" stop-color="#766856"/></linearGradient><linearGradient id="f512"><stop offset="0" stop-color="#f4eede"/><stop offset="0.06" stop-color="#f4eede"/><stop offset="0.2" stop-color="#9c8c74"/><stop offset="1" stop-color="#766856"/></linearGradient><linearGradient id="f520"><stop offset="0" stop-color="#f4eee0"/><stop offset="0.012" stop-color="#f4eee0"/><stop offset="0.05" stop-color="#a8987d"/><stop offset="1" stop-color="#82745f"/></linearGradient><linearGradient id="f521"><stop offset="0" stop-color="#f4eee0"/><stop offset="0.045" stop-color="#f4eee0"/><stop offset="0.15" stop-color="#a8987d"/><stop offset="1" stop-color="#82745f"/></linearGradient><linearGradient id="f522"><stop offset="0" stop-color="#f4eee0"/><stop offset="0.06" stop-color="#f4eee0"/><stop offset="0.2" stop-color="#a8987d"/><stop offset="1" stop-color="#82745f"/></linearGradient><linearGradient id="f600"><stop offset="0" stop-color="#f4eee0"/><stop offset="0.012" stop-color="#f4eee0"/><stop offset="0.05" stop-color="#9a8c7a"/><stop offset="1" stop-color="#74685c"/></linearGradient><linearGradient id="f601"><stop offset="0" stop-color="#f4eee0"/><stop offset="0.045" stop-color="#f4eee0"/><stop offset="0.15" stop-color="#9a8c7a"/><stop offset="1" stop-color="#74685c"/></linearGradient><linearGradient id="f602"><stop offset="0" stop-color="#f4eee0"/><stop offset="0.06" stop-color="#f4eee0"/><stop offset="0.2" stop-color="#9a8c7a"/><stop offset="1" stop-color="#74685c"/></linearGradient><linearGradient id="f610"><stop offset="0" stop-color="#f4eee0"/><stop offset="0.012" stop-color="#f4eee0"/><stop offset="0.05" stop-color="#a89a86"/><stop offset="1" stop-color="#827668"/></linearGradient><linearGradient id="f611"><stop offset="0" stop-color="#f4eee0"/><stop offset="0.045" stop-color="#f4eee0"/><stop offset="0.15" stop-color="#a89a86"/><stop offset="1" stop-color="#827668"/></linearGradient><linearGradient id="f612"><stop offset="0" stop-color="#f4eee0"/><stop offset="0.06" stop-color="#f4eee0"/><stop offset="0.2" stop-color="#a89a86"/><stop offset="1" stop-color="#827668"/></linearGradient><linearGradient id="f620"><stop offset="0" stop-color="#f4eee0"/><stop offset="0.012" stop-color="#f4eee0"/><stop offset="0.05" stop-color="#b4a68f"/><stop offset="1" stop-color="#8e8271"/></linearGradient><linearGradient id="f621"><stop offset="0" stop-color="#f4eee0"/><stop offset="0.045" stop-color="#f4eee0"/><stop offset="0.15" stop-color="#b4a68f"/><stop offset="1" stop-color="#8e8271"/></linearGradient><linearGradient id="f622"><stop offset="0" stop-color="#f4eee0"/><stop offset="0.06" stop-color="#f4eee0"/><stop offset="0.2" stop-color="#b4a68f"/><stop offset="1" stop-color="#8e8271"/></linearGradient><linearGradient id="f700"><stop offset="0" stop-color="#f4eee0"/><stop offset="0.012" stop-color="#f4eee0"/><stop offset="0.05" stop-color="#a89e90"/><stop offset="1" stop-color="#827a72"/></linearGradient><linearGradient id="f701"><stop offset="0" stop-color="#f4eee0"/><stop offset="0.045" stop-color="#f4eee0"/><stop offset="0.15" stop-color="#a89e90"/><stop offset="1" stop-color="#827a72"/></linearGradient><linearGradient id="f702"><stop offset="0" stop-color="#f4eee0"/><stop offset="0.06" stop-color="#f4eee0"/><stop offset="0.2" stop-color="#a89e90"/><stop offset="1" stop-color="#827a72"/></linearGradient><linearGradient id="f710"><stop offset="0" stop-color="#f4eee0"/><stop offset="0.012" stop-color="#f4eee0"/><stop offset="0.05" stop-color="#b6ac9c"/><stop offset="1" stop-color="#90887e"/></linearGradient><linearGradient id="f711"><stop offset="0" stop-color="#f4eee0"/><stop offset="0.045" stop-color="#f4eee0"/><stop offset="0.15" stop-color="#b6ac9c"/><stop offset="1" stop-color="#90887e"/></linearGradient><linearGradient id="f712"><stop offset="0" stop-color="#f4eee0"/><stop offset="0.06" stop-color="#f4eee0"/><stop offset="0.2" stop-color="#b6ac9c"/><stop offset="1" stop-color="#90887e"/></linearGradient><linearGradient id="f720"><stop offset="0" stop-color="#f4eee0"/><stop offset="0.012" stop-color="#f4eee0"/><stop offset="0.05" stop-color="#c2b8a5"/><stop offset="1" stop-color="#9c9487"/></linearGradient><linearGradient id="f721"><stop offset="0" stop-color="#f4eee0"/><stop offset="0.045" stop-color="#f4eee0"/><stop offset="0.15" stop-color="#c2b8a5"/><stop offset="1" stop-color="#9c9487"/></linearGradient><linearGradient id="f722"><stop offset="0" stop-color="#f4eee0"/><stop offset="0.06" stop-color="#f4eee0"/><stop offset="0.2" stop-color="#c2b8a5"/><stop offset="1" stop-color="#9c9487"/></linearGradient></defs>
<ellipse cx="761.8" cy="607.0" rx="81.8" ry="12.1" transform="rotate(21 761.8 607.0)" fill="url(#f010)" stroke="#9c8c74" stroke-width=".7" stroke-opacity=".55"/>
<path d="M703.7 585.2L830.7 632.9" stroke="#241608" stroke-width="1" opacity=".6"/>
<ellipse cx="772.2" cy="580.1" rx="81.8" ry="12.4" transform="rotate(13 772.2 580.1)" fill="url(#f010)" stroke="#9c8c74" stroke-width=".7" stroke-opacity=".55"/>
<path d="M711.6 566.6L844.1 596.1" stroke="#241608" stroke-width="1" opacity=".6"/>
<ellipse cx="790.2" cy="616.5" rx="67.5" ry="13.3" transform="rotate(18 790.2 616.5)" fill="url(#f100)" stroke="#b09c7e" stroke-width=".7" stroke-opacity=".55"/>
<path d="M741.4 600.8L848.1 635.1" stroke="#382612" stroke-width="1" opacity=".6"/>
<ellipse cx="793.1" cy="578.7" rx="67.0" ry="12.2" transform="rotate(9 793.1 578.7)" fill="url(#f110)" stroke="#b09c7e" stroke-width=".7" stroke-opacity=".55"/>
<path d="M742.8 570.9L852.7 587.9" stroke="#382612" stroke-width="1" opacity=".6"/>
<ellipse cx="827.8" cy="612.4" rx="63.7" ry="11.5" transform="rotate(20 827.8 612.4)" fill="url(#f220)" stroke="#c0aa86" stroke-width=".7" stroke-opacity=".55"/>
<ellipse cx="848.8" cy="638.4" rx="76.3" ry="12.6" transform="rotate(19 848.8 638.4)" fill="url(#f210)" stroke="#c0aa86" stroke-width=".7" stroke-opacity=".55"/>
<path d="M793.9 619.7L913.8 660.6" stroke="#48341a" stroke-width="1" opacity=".6"/>
<ellipse cx="830.4" cy="589.3" rx="62.5" ry="12.8" transform="rotate(13 830.4 589.3)" fill="url(#f210)" stroke="#c0aa86" stroke-width=".7" stroke-opacity=".55"/>
<path d="M784.1 578.6L885.3 601.9" stroke="#48341a" stroke-width="1" opacity=".6"/>
<ellipse cx="866.8" cy="637.1" rx="56.3" ry="13.3" transform="rotate(21 866.8 637.1)" fill="url(#f100)" stroke="#b09c7e" stroke-width=".7" stroke-opacity=".55"/>
<path d="M826.9 621.9L914.2 655.1" stroke="#382612" stroke-width="1" opacity=".6"/>
<ellipse cx="894.2" cy="635.6" rx="3.1" ry="2.2" transform="rotate(15 894.2 635.6)" fill="#ece5d4" opacity=".8"/>
<ellipse cx="864.8" cy="648.2" rx="4.8" ry="1.9" transform="rotate(52 864.8 648.2)" fill="#ece5d4" opacity=".8"/>
<ellipse cx="846.2" cy="617.3" rx="5.2" ry="2.4" transform="rotate(-11 846.2 617.3)" fill="#ece5d4" opacity=".8"/>
<ellipse cx="871.3" cy="618.6" rx="58.8" ry="11.5" transform="rotate(14 871.3 618.6)" fill="url(#f210)" stroke="#c0aa86" stroke-width=".7" stroke-opacity=".55"/>
<path d="M827.9 607.8L922.7 631.3" stroke="#48341a" stroke-width="1" opacity=".6"/>
<ellipse cx="877.4" cy="606.0" rx="67.0" ry="14.2" transform="rotate(17 877.4 606.0)" fill="url(#f200)" stroke="#c0aa86" stroke-width=".7" stroke-opacity=".55"/>
<ellipse cx="844.7" cy="608.5" rx="3.8" ry="2.0" transform="rotate(-18 844.7 608.5)" fill="#ece5d4" opacity=".8"/>
<ellipse cx="893.8" cy="623.4" rx="4.4" ry="1.8" transform="rotate(-3 893.8 623.4)" fill="#ece5d4" opacity=".8"/>
<ellipse cx="905.9" cy="658.6" rx="52.5" ry="14.2" transform="rotate(16 905.9 658.6)" fill="url(#f210)" stroke="#c0aa86" stroke-width=".7" stroke-opacity=".55"/>
<path d="M867.6 647.4L951.3 672.0" stroke="#48341a" stroke-width="1" opacity=".6"/>
<ellipse cx="911.0" cy="672.5" rx="4.9" ry="2.5" transform="rotate(-6 911.0 672.5)" fill="#ece5d4" opacity=".8"/>
<ellipse cx="923.5" cy="636.2" rx="61.0" ry="12.2" transform="rotate(12 923.5 636.2)" fill="url(#f220)" stroke="#c0aa86" stroke-width=".7" stroke-opacity=".55"/>
<path d="M878.2 626.6L977.2 647.6" stroke="#48341a" stroke-width="1" opacity=".6"/>
<ellipse cx="914.5" cy="623.8" rx="3.4" ry="2.0" transform="rotate(12 914.5 623.8)" fill="#ece5d4" opacity=".8"/>
<ellipse cx="928.2" cy="626.7" rx="4.7" ry="2.5" transform="rotate(6 928.2 626.7)" fill="#ece5d4" opacity=".8"/>
<ellipse cx="941.7" cy="650.6" rx="3.9" ry="1.8" transform="rotate(-5 941.7 650.6)" fill="#ece5d4" opacity=".8"/>
<ellipse cx="925.3" cy="610.4" rx="63.6" ry="11.1" transform="rotate(8 925.3 610.4)" fill="url(#f210)" stroke="#c0aa86" stroke-width=".7" stroke-opacity=".55"/>
<path d="M877.6 603.2L981.9 618.8" stroke="#48341a" stroke-width="1" opacity=".6"/>
<ellipse cx="913.6" cy="592.5" rx="56.7" ry="12.1" transform="rotate(14 913.6 592.5)" fill="url(#f100)" stroke="#b09c7e" stroke-width=".7" stroke-opacity=".55"/>
<path d="M871.7 582.3L963.2 604.5" stroke="#382612" stroke-width="1" opacity=".6"/>
<ellipse cx="885.0" cy="595.9" rx="5.5" ry="2.4" transform="rotate(-18 885.0 595.9)" fill="#ece5d4" opacity=".8"/>
<ellipse cx="946.2" cy="672.5" rx="46.0" ry="11.3" transform="rotate(19 946.2 672.5)" fill="url(#f320)" stroke="#ceb690" stroke-width=".7" stroke-opacity=".55"/>
<path d="M913.2 661.0L985.2 686.2" stroke="#564024" stroke-width="1" opacity=".6"/>
<ellipse cx="922.2" cy="674.2" rx="5.6" ry="2.0" transform="rotate(5 922.2 674.2)" fill="#ece5d4" opacity=".8"/>
<ellipse cx="934.5" cy="678.5" rx="3.2" ry="2.0" transform="rotate(-3 934.5 678.5)" fill="#ece5d4" opacity=".8"/>
<ellipse cx="949.7" cy="656.2" rx="47.9" ry="14.1" transform="rotate(23 949.7 656.2)" fill="url(#f320)" stroke="#ceb690" stroke-width=".7" stroke-opacity=".55"/>
<path d="M916.3 641.7L989.3 673.3" stroke="#564024" stroke-width="1" opacity=".6"/>
<ellipse cx="940.9" cy="665.2" rx="5.0" ry="2.6" transform="rotate(11 940.9 665.2)" fill="#ece5d4" opacity=".8"/>
<ellipse cx="962.7" cy="629.5" rx="55.3" ry="11.3" transform="rotate(10 962.7 629.5)" fill="url(#f200)" stroke="#c0aa86" stroke-width=".7" stroke-opacity=".55"/>
<path d="M921.3 622.3L1011.8 638.1" stroke="#48341a" stroke-width="1" opacity=".6"/>
<ellipse cx="939.2" cy="615.8" rx="3.3" ry="3.0" transform="rotate(13 939.2 615.8)" fill="#ece5d4" opacity=".8"/>
<ellipse cx="948.3" cy="610.8" rx="45.1" ry="13.5" transform="rotate(16 948.3 610.8)" fill="url(#f210)" stroke="#c0aa86" stroke-width=".7" stroke-opacity=".55"/>
<path d="M915.3 601.5L987.4 621.8" stroke="#48341a" stroke-width="1" opacity=".6"/>
<ellipse cx="927.4" cy="593.1" rx="4.1" ry="2.5" transform="rotate(45 927.4 593.1)" fill="#ece5d4" opacity=".8"/>
<ellipse cx="942.3" cy="597.3" rx="3.4" ry="1.7" transform="rotate(46 942.3 597.3)" fill="#ece5d4" opacity=".8"/>
<ellipse cx="960.7" cy="592.4" rx="55.3" ry="12.2" transform="rotate(15 960.7 592.4)" fill="url(#f220)" stroke="#c0aa86" stroke-width=".7" stroke-opacity=".55"/>
<path d="M920.0 581.8L1008.8 604.9" stroke="#48341a" stroke-width="1" opacity=".6"/>
<ellipse cx="979.9" cy="678.9" rx="44.8" ry="14.3" transform="rotate(15 979.9 678.9)" fill="url(#f311)" stroke="#ceb690" stroke-width=".7" stroke-opacity=".55"/>
<path d="M947.0 669.9L1018.7 689.6" stroke="#564024" stroke-width="1" opacity=".6"/>
<ellipse cx="973.3" cy="666.1" rx="41.0" ry="12.5" transform="rotate(19 973.3 666.1)" fill="url(#f221)" stroke="#c0aa86" stroke-width=".7" stroke-opacity=".55"/>
<path d="M943.8 656.1L1008.2 678.1" stroke="#48341a" stroke-width="1" opacity=".6"/>
<ellipse cx="972.6" cy="642.3" rx="41.2" ry="13.4" transform="rotate(17 972.6 642.3)" fill="url(#f211)" stroke="#c0aa86" stroke-width=".7" stroke-opacity=".55"/>
<path d="M942.6 633.1L1008.0 653.2" stroke="#48341a" stroke-width="1" opacity=".6"/>
<ellipse cx="972.6" cy="622.8" rx="40.4" ry="14.0" transform="rotate(10 972.6 622.8)" fill="url(#f321)" stroke="#ceb690" stroke-width=".7" stroke-opacity=".55"/>
<ellipse cx="977.4" cy="635.6" rx="3.8" ry="2.2" transform="rotate(22 977.4 635.6)" fill="#ece5d4" opacity=".8"/>
<ellipse cx="975.6" cy="603.9" rx="42.4" ry="13.0" transform="rotate(7 975.6 603.9)" fill="url(#f321)" stroke="#ceb690" stroke-width=".7" stroke-opacity=".55"/>
<path d="M943.7 599.9L1013.5 608.6" stroke="#564024" stroke-width="1" opacity=".6"/>
<ellipse cx="983.5" cy="593.9" rx="4.6" ry="2.4" transform="rotate(-13 983.5 593.9)" fill="#ece5d4" opacity=".8"/>
<ellipse cx="950.2" cy="611.7" rx="4.9" ry="2.3" transform="rotate(33 950.2 611.7)" fill="#ece5d4" opacity=".8"/>
<ellipse cx="1000.0" cy="695.9" rx="42.7" ry="13.3" transform="rotate(20 1000.0 695.9)" fill="url(#f311)" stroke="#ceb690" stroke-width=".7" stroke-opacity=".55"/>
<path d="M969.4 685.0L1036.2 708.8" stroke="#564024" stroke-width="1" opacity=".6"/>
<ellipse cx="978.5" cy="700.1" rx="3.9" ry="2.1" transform="rotate(39 978.5 700.1)" fill="#ece5d4" opacity=".8"/>
<ellipse cx="993.6" cy="681.8" rx="5.3" ry="2.6" transform="rotate(-15 993.6 681.8)" fill="#ece5d4" opacity=".8"/>
<ellipse cx="975.8" cy="584.8" rx="41.6" ry="11.2" transform="rotate(12 975.8 584.8)" fill="url(#f311)" stroke="#ceb690" stroke-width=".7" stroke-opacity=".55"/>
<ellipse cx="970.0" cy="593.2" rx="4.0" ry="2.6" transform="rotate(12 970.0 593.2)" fill="#ece5d4" opacity=".8"/>
<ellipse cx="988.1" cy="577.8" rx="3.5" ry="2.3" transform="rotate(-23 988.1 577.8)" fill="#ece5d4" opacity=".8"/>
<ellipse cx="1004.4" cy="669.1" rx="41.1" ry="13.9" transform="rotate(10 1004.4 669.1)" fill="url(#f321)" stroke="#ceb690" stroke-width=".7" stroke-opacity=".55"/>
<ellipse cx="982.1" cy="653.5" rx="5.2" ry="1.8" transform="rotate(-13 982.1 653.5)" fill="#ece5d4" opacity=".8"/>
<ellipse cx="1002.7" cy="680.7" rx="5.0" ry="2.1" transform="rotate(20 1002.7 680.7)" fill="#ece5d4" opacity=".8"/>
<ellipse cx="989.2" cy="678.4" rx="5.8" ry="1.9" transform="rotate(-9 989.2 678.4)" fill="#ece5d4" opacity=".8"/>
<ellipse cx="1006.4" cy="656.0" rx="42.9" ry="13.9" transform="rotate(13 1006.4 656.0)" fill="url(#f211)" stroke="#c0aa86" stroke-width=".7" stroke-opacity=".55"/>
<path d="M974.6 648.9L1044.0 664.4" stroke="#48341a" stroke-width="1" opacity=".6"/>
<ellipse cx="983.5" cy="662.8" rx="5.4" ry="2.6" transform="rotate(40 983.5 662.8)" fill="#ece5d4" opacity=".8"/>
<ellipse cx="1010.5" cy="645.0" rx="3.4" ry="1.7" transform="rotate(-21 1010.5 645.0)" fill="#ece5d4" opacity=".8"/>
<ellipse cx="1022.3" cy="647.6" rx="3.5" ry="2.8" transform="rotate(41 1022.3 647.6)" fill="#ece5d4" opacity=".8"/>
<ellipse cx="1003.5" cy="634.6" rx="44.9" ry="12.5" transform="rotate(12 1003.5 634.6)" fill="url(#f311)" stroke="#ceb690" stroke-width=".7" stroke-opacity=".55"/>
<path d="M970.1 627.7L1043.1 642.7" stroke="#564024" stroke-width="1" opacity=".6"/>
<ellipse cx="1015.5" cy="647.8" rx="5.5" ry="2.5" transform="rotate(27 1015.5 647.8)" fill="#ece5d4" opacity=".8"/>
<ellipse cx="1024.2" cy="628.1" rx="3.1" ry="2.8" transform="rotate(46 1024.2 628.1)" fill="#ece5d4" opacity=".8"/>
<ellipse cx="989.9" cy="621.0" rx="5.1" ry="1.9" transform="rotate(14 989.9 621.0)" fill="#ece5d4" opacity=".8"/>
<ellipse cx="997.3" cy="594.2" rx="37.7" ry="12.6" transform="rotate(3 997.3 594.2)" fill="url(#f311)" stroke="#ceb690" stroke-width=".7" stroke-opacity=".55"/>
<path d="M968.8 592.6L1031.2 596.0" stroke="#564024" stroke-width="1" opacity=".6"/>
<ellipse cx="978.0" cy="582.5" rx="5.2" ry="2.1" transform="rotate(-20 978.0 582.5)" fill="#ece5d4" opacity=".8"/>
<ellipse cx="1017.2" cy="605.8" rx="5.1" ry="1.9" transform="rotate(-4 1017.2 605.8)" fill="#ece5d4" opacity=".8"/>
<ellipse cx="1007.2" cy="617.9" rx="41.2" ry="12.5" transform="rotate(8 1007.2 617.9)" fill="url(#f321)" stroke="#ceb690" stroke-width=".7" stroke-opacity=".55"/>
<ellipse cx="1018.9" cy="630.1" rx="5.3" ry="2.8" transform="rotate(37 1018.9 630.1)" fill="#ece5d4" opacity=".8"/>
<ellipse cx="1020.2" cy="630.3" rx="5.5" ry="2.9" transform="rotate(12 1020.2 630.3)" fill="#ece5d4" opacity=".8"/>
<ellipse cx="1021.8" cy="630.5" rx="5.2" ry="1.9" transform="rotate(14 1021.8 630.5)" fill="#ece5d4" opacity=".8"/>
<ellipse cx="1029.5" cy="695.9" rx="39.6" ry="14.3" transform="rotate(8 1029.5 695.9)" fill="url(#f301)" stroke="#ceb690" stroke-width=".7" stroke-opacity=".55"/>
<path d="M999.8 691.6L1064.8 701.1" stroke="#564024" stroke-width="1" opacity=".6"/>
<ellipse cx="1025.0" cy="683.1" rx="5.1" ry="2.2" transform="rotate(30 1025.0 683.1)" fill="#ece5d4" opacity=".8"/>
<ellipse cx="1007.7" cy="577.5" rx="41.1" ry="13.8" transform="rotate(2 1007.7 577.5)" fill="url(#f311)" stroke="#ceb690" stroke-width=".7" stroke-opacity=".55"/>
<path d="M976.4 576.6L1044.6 578.6" stroke="#564024" stroke-width="1" opacity=".6"/>
<ellipse cx="1030.1" cy="566.6" rx="5.1" ry="2.3" transform="rotate(25 1030.1 566.6)" fill="#ece5d4" opacity=".8"/>
<ellipse cx="1027.6" cy="566.5" rx="4.5" ry="2.1" transform="rotate(36 1027.6 566.5)" fill="#ece5d4" opacity=".8"/>
<ellipse cx="1033.1" cy="671.1" rx="39.6" ry="14.1" transform="rotate(1 1033.1 671.1)" fill="url(#f311)" stroke="#ceb690" stroke-width=".7" stroke-opacity=".55"/>
<path d="M1003.0 670.7L1068.8 671.7" stroke="#564024" stroke-width="1" opacity=".6"/>
<ellipse cx="1030.6" cy="683.0" rx="4.8" ry="2.4" transform="rotate(-22 1030.6 683.0)" fill="#ece5d4" opacity=".8"/>
<ellipse cx="1029.4" cy="682.9" rx="5.9" ry="1.6" transform="rotate(-1 1029.4 682.9)" fill="#ece5d4" opacity=".8"/>
<ellipse cx="1014.7" cy="659.0" rx="5.3" ry="2.3" transform="rotate(-28 1014.7 659.0)" fill="#ece5d4" opacity=".8"/>
<ellipse cx="1031.1" cy="653.0" rx="36.9" ry="14.5" transform="rotate(8 1031.1 653.0)" fill="url(#f311)" stroke="#ceb690" stroke-width=".7" stroke-opacity=".55"/>
<path d="M1003.3 649.1L1063.9 657.6" stroke="#564024" stroke-width="1" opacity=".6"/>
<ellipse cx="1030.7" cy="679.6" rx="23.0" ry="8.6" transform="rotate(-6 1030.7 679.6)" fill="url(#f311)" stroke="#ceb690" stroke-width=".7" stroke-opacity=".55"/>
<path d="M1013.3 681.4L1051.2 677.3" stroke="#564024" stroke-width="1" opacity=".6"/>
<ellipse cx="1033.0" cy="634.5" rx="37.3" ry="13.9" transform="rotate(6 1033.0 634.5)" fill="url(#f201)" stroke="#c0aa86" stroke-width=".7" stroke-opacity=".55"/>
<ellipse cx="1024.8" cy="662.8" rx="18.7" ry="8.7" transform="rotate(1 1024.8 662.8)" fill="url(#f302)" stroke="#ceb690" stroke-width=".7" stroke-opacity=".55"/>
<path d="M1010.6 662.6L1041.6 663.1" stroke="#564024" stroke-width="1" opacity=".6"/>
<ellipse cx="1018.3" cy="670.0" rx="3.5" ry="2.0" transform="rotate(-3 1018.3 670.0)" fill="#ece5d4" opacity=".8"/>
<ellipse cx="1015.3" cy="655.4" rx="5.6" ry="2.8" transform="rotate(7 1015.3 655.4)" fill="#ece5d4" opacity=".8"/>
<ellipse cx="1034.6" cy="608.6" rx="40.2" ry="15.1" transform="rotate(-3 1034.6 608.6)" fill="url(#f321)" stroke="#ceb690" stroke-width=".7" stroke-opacity=".55"/>
<path d="M1004.1 610.2L1070.7 606.7" stroke="#564024" stroke-width="1" opacity=".6"/>
<ellipse cx="1041.3" cy="621.0" rx="3.3" ry="2.1" transform="rotate(-23 1041.3 621.0)" fill="#ece5d4" opacity=".8"/>
<ellipse cx="1044.0" cy="620.9" rx="4.0" ry="2.8" transform="rotate(-3 1044.0 620.9)" fill="#ece5d4" opacity=".8"/>
<ellipse cx="1024.6" cy="637.0" rx="20.6" ry="9.1" transform="rotate(-7 1024.6 637.0)" fill="url(#f221)" stroke="#c0aa86" stroke-width=".7" stroke-opacity=".55"/>
<path d="M1009.0 638.9L1043.0 634.9" stroke="#48341a" stroke-width="1" opacity=".6"/>
<ellipse cx="1028.4" cy="591.4" rx="35.7" ry="14.3" transform="rotate(0 1028.4 591.4)" fill="url(#f411)" stroke="#dac6a6" stroke-width=".7" stroke-opacity=".55"/>
<path d="M1001.2 591.2L1060.5 591.6" stroke="#62503a" stroke-width="1" opacity=".6"/>
<ellipse cx="1029.6" cy="579.4" rx="5.5" ry="2.4" transform="rotate(-3 1029.6 579.4)" fill="#ece5d4" opacity=".8"/>
<ellipse cx="1035.0" cy="603.5" rx="5.8" ry="1.8" transform="rotate(-30 1035.0 603.5)" fill="#ece5d4" opacity=".8"/>
<ellipse cx="1020.8" cy="579.3" rx="3.9" ry="2.1" transform="rotate(8 1020.8 579.3)" fill="#ece5d4" opacity=".8"/>
<ellipse cx="1036.2" cy="611.2" rx="32.7" ry="13.1" transform="rotate(-13 1036.2 611.2)" fill="url(#f411)" stroke="#dac6a6" stroke-width=".7" stroke-opacity=".55"/>
<path d="M1011.9 616.7L1064.9 604.5" stroke="#62503a" stroke-width="1" opacity=".6"/>
<ellipse cx="1016.1" cy="604.4" rx="4.8" ry="2.6" transform="rotate(-45 1016.1 604.4)" fill="#ece5d4" opacity=".8"/>
<ellipse cx="1054.8" cy="618.2" rx="4.9" ry="2.0" transform="rotate(-2 1054.8 618.2)" fill="#ece5d4" opacity=".8"/>
<ellipse cx="1029.9" cy="561.7" rx="38.7" ry="13.7" transform="rotate(-8 1029.9 561.7)" fill="url(#f321)" stroke="#ceb690" stroke-width=".7" stroke-opacity=".55"/>
<path d="M1000.8 565.9L1064.3 556.7" stroke="#564024" stroke-width="1" opacity=".6"/>
<ellipse cx="1040.4" cy="571.8" rx="5.5" ry="2.5" transform="rotate(16 1040.4 571.8)" fill="#ece5d4" opacity=".8"/>
<ellipse cx="1016.7" cy="575.2" rx="6.0" ry="2.8" transform="rotate(-37 1016.7 575.2)" fill="#ece5d4" opacity=".8"/>
<ellipse cx="1028.7" cy="573.5" rx="4.1" ry="2.7" transform="rotate(23 1028.7 573.5)" fill="#ece5d4" opacity=".8"/>
<ellipse cx="1043.1" cy="656.0" rx="20.5" ry="8.2" transform="rotate(-12 1043.1 656.0)" fill="url(#f321)" stroke="#ceb690" stroke-width=".7" stroke-opacity=".55"/>
<path d="M1027.8 659.2L1061.2 652.3" stroke="#564024" stroke-width="1" opacity=".6"/>
<ellipse cx="1035.6" cy="664.6" rx="4.1" ry="1.9" transform="rotate(22 1035.6 664.6)" fill="#ece5d4" opacity=".8"/>
<ellipse cx="1032.7" cy="665.2" rx="3.9" ry="1.9" transform="rotate(-36 1032.7 665.2)" fill="#ece5d4" opacity=".8"/>
<ellipse cx="1036.3" cy="568.7" rx="33.8" ry="14.9" transform="rotate(-17 1036.3 568.7)" fill="url(#f421)" stroke="#dac6a6" stroke-width=".7" stroke-opacity=".55"/>
<path d="M1011.8 576.4L1065.3 559.7" stroke="#62503a" stroke-width="1" opacity=".6"/>
<ellipse cx="1052.3" cy="576.8" rx="3.7" ry="2.3" transform="rotate(-12 1052.3 576.8)" fill="#ece5d4" opacity=".8"/>
<ellipse cx="1050.1" cy="681.0" rx="19.6" ry="8.4" transform="rotate(-12 1050.1 681.0)" fill="url(#f302)" stroke="#ceb690" stroke-width=".7" stroke-opacity=".55"/>
<path d="M1035.5 684.0L1067.4 677.5" stroke="#564024" stroke-width="1" opacity=".6"/>
<ellipse cx="1047.7" cy="688.7" rx="3.5" ry="2.9" transform="rotate(-43 1047.7 688.7)" fill="#ece5d4" opacity=".8"/>
<ellipse cx="1051.5" cy="688.0" rx="4.4" ry="1.9" transform="rotate(18 1051.5 688.0)" fill="#ece5d4" opacity=".8"/>
<ellipse cx="1040.6" cy="592.4" rx="30.4" ry="14.2" transform="rotate(-9 1040.6 592.4)" fill="url(#f411)" stroke="#dac6a6" stroke-width=".7" stroke-opacity=".55"/>
<path d="M1017.8 596.2L1067.7 588.0" stroke="#62503a" stroke-width="1" opacity=".6"/>
<ellipse cx="1021.3" cy="583.5" rx="5.3" ry="1.8" transform="rotate(4 1021.3 583.5)" fill="#ece5d4" opacity=".8"/>
<ellipse cx="1025.0" cy="582.9" rx="4.9" ry="2.7" transform="rotate(18 1025.0 582.9)" fill="#ece5d4" opacity=".8"/>
<ellipse cx="1056.3" cy="608.0" rx="32.9" ry="14.9" transform="rotate(-21 1056.3 608.0)" fill="url(#f411)" stroke="#dac6a6" stroke-width=".7" stroke-opacity=".55"/>
<path d="M1033.0 617.2L1083.9 597.2" stroke="#62503a" stroke-width="1" opacity=".6"/>
<ellipse cx="1071.0" cy="615.7" rx="3.2" ry="1.8" transform="rotate(-6 1071.0 615.7)" fill="#ece5d4" opacity=".8"/>
<ellipse cx="1050.3" cy="638.8" rx="19.2" ry="10.0" transform="rotate(-13 1050.3 638.8)" fill="url(#f302)" stroke="#ceb690" stroke-width=".7" stroke-opacity=".55"/>
<path d="M1036.1 642.2L1067.1 634.8" stroke="#564024" stroke-width="1" opacity=".6"/>
<ellipse cx="1056.2" cy="628.8" rx="4.1" ry="2.4" transform="rotate(-29 1056.2 628.8)" fill="#ece5d4" opacity=".8"/>
<ellipse cx="1066.2" cy="678.9" rx="20.4" ry="9.3" transform="rotate(-17 1066.2 678.9)" fill="url(#f211)" stroke="#c0aa86" stroke-width=".7" stroke-opacity=".55"/>
<path d="M1051.3 683.4L1083.9 673.7" stroke="#48341a" stroke-width="1" opacity=".6"/>
<ellipse cx="1054.1" cy="674.4" rx="4.0" ry="1.9" transform="rotate(-9 1054.1 674.4)" fill="#ece5d4" opacity=".8"/>
<ellipse cx="1052.4" cy="674.9" rx="4.8" ry="2.1" transform="rotate(-24 1052.4 674.9)" fill="#ece5d4" opacity=".8"/>
<ellipse cx="1059.7" cy="672.7" rx="5.6" ry="2.7" transform="rotate(-31 1059.7 672.7)" fill="#ece5d4" opacity=".8"/>
<ellipse cx="1059.9" cy="661.8" rx="18.1" ry="10.2" transform="rotate(-21 1059.9 661.8)" fill="url(#f202)" stroke="#c0aa86" stroke-width=".7" stroke-opacity=".55"/>
<path d="M1047.1 666.8L1075.1 656.0" stroke="#48341a" stroke-width="1" opacity=".6"/>
<ellipse cx="1058.1" cy="653.3" rx="3.7" ry="1.9" transform="rotate(-10 1058.1 653.3)" fill="#ece5d4" opacity=".8"/>
<ellipse cx="1058.2" cy="643.4" rx="18.7" ry="10.1" transform="rotate(-20 1058.2 643.4)" fill="url(#f312)" stroke="#ceb690" stroke-width=".7" stroke-opacity=".55"/>
<ellipse cx="1053.1" cy="654.2" rx="3.7" ry="2.2" transform="rotate(-33 1053.1 654.2)" fill="#ece5d4" opacity=".8"/>
<ellipse cx="1061.9" cy="589.6" rx="31.5" ry="15.8" transform="rotate(-16 1061.9 589.6)" fill="url(#f411)" stroke="#dac6a6" stroke-width=".7" stroke-opacity=".55"/>
<path d="M1038.8 596.0L1089.2 582.0" stroke="#62503a" stroke-width="1" opacity=".6"/>
<ellipse cx="1057.2" cy="559.1" rx="32.5" ry="14.0" transform="rotate(-27 1057.2 559.1)" fill="url(#f411)" stroke="#dac6a6" stroke-width=".7" stroke-opacity=".55"/>
<path d="M1035.1 570.2L1083.3 546.0" stroke="#62503a" stroke-width="1" opacity=".6"/>
<ellipse cx="1083.0" cy="687.6" rx="21.5" ry="8.2" transform="rotate(-13 1083.0 687.6)" fill="url(#f301)" stroke="#ceb690" stroke-width=".7" stroke-opacity=".55"/>
<path d="M1067.0 691.2L1101.9 683.3" stroke="#564024" stroke-width="1" opacity=".6"/>
<ellipse cx="1076.0" cy="696.3" rx="4.1" ry="2.8" transform="rotate(12 1076.0 696.3)" fill="#ece5d4" opacity=".8"/>
<ellipse cx="1087.2" cy="693.7" rx="3.4" ry="2.2" transform="rotate(-9 1087.2 693.7)" fill="#ece5d4" opacity=".8"/>
<ellipse cx="1073.8" cy="682.6" rx="4.8" ry="2.8" transform="rotate(16 1073.8 682.6)" fill="#ece5d4" opacity=".8"/>
<ellipse cx="1074.6" cy="615.5" rx="30.2" ry="15.7" transform="rotate(-23 1074.6 615.5)" fill="url(#f301)" stroke="#ceb690" stroke-width=".7" stroke-opacity=".55"/>
<path d="M1053.4 624.5L1099.7 604.9" stroke="#564024" stroke-width="1" opacity=".6"/>
<ellipse cx="1072.9" cy="580.8" rx="31.8" ry="14.3" transform="rotate(-21 1072.9 580.8)" fill="url(#f411)" stroke="#dac6a6" stroke-width=".7" stroke-opacity=".55"/>
<path d="M1050.3 589.3L1099.8 570.7" stroke="#62503a" stroke-width="1" opacity=".6"/>
<ellipse cx="1054.9" cy="574.7" rx="3.1" ry="1.9" transform="rotate(-36 1054.9 574.7)" fill="#ece5d4" opacity=".8"/>
<ellipse cx="1091.3" cy="586.8" rx="5.4" ry="1.7" transform="rotate(-28 1091.3 586.8)" fill="#ece5d4" opacity=".8"/>
<ellipse cx="1094.3" cy="585.6" rx="5.0" ry="2.6" transform="rotate(-22 1094.3 585.6)" fill="#ece5d4" opacity=".8"/>
<ellipse cx="1077.9" cy="597.0" rx="30.2" ry="14.5" transform="rotate(-24 1077.9 597.0)" fill="url(#f421)" stroke="#dac6a6" stroke-width=".7" stroke-opacity=".55"/>
<path d="M1057.0 606.4L1102.6 585.7" stroke="#62503a" stroke-width="1" opacity=".6"/>
<ellipse cx="1091.9" cy="604.0" rx="4.0" ry="2.6" transform="rotate(-34 1091.9 604.0)" fill="#ece5d4" opacity=".8"/>
<ellipse cx="1076.7" cy="584.1" rx="5.8" ry="2.6" transform="rotate(-10 1076.7 584.1)" fill="#ece5d4" opacity=".8"/>
<ellipse cx="1079.6" cy="582.8" rx="4.7" ry="2.7" transform="rotate(-13 1079.6 582.8)" fill="#ece5d4" opacity=".8"/>
<ellipse cx="1082.8" cy="649.4" rx="21.2" ry="8.4" transform="rotate(-22 1082.8 649.4)" fill="url(#f211)" stroke="#c0aa86" stroke-width=".7" stroke-opacity=".55"/>
<path d="M1067.7 655.3L1100.5 642.4" stroke="#48341a" stroke-width="1" opacity=".6"/>
<ellipse cx="1077.6" cy="659.0" rx="4.4" ry="2.3" transform="rotate(-12 1077.6 659.0)" fill="#ece5d4" opacity=".8"/>
<ellipse cx="1074.0" cy="645.3" rx="4.0" ry="2.6" transform="rotate(10 1074.0 645.3)" fill="#ece5d4" opacity=".8"/>
<ellipse cx="1075.5" cy="659.8" rx="5.0" ry="2.4" transform="rotate(-1 1075.5 659.8)" fill="#ece5d4" opacity=".8"/>
<ellipse cx="1086.9" cy="664.5" rx="21.2" ry="9.5" transform="rotate(-23 1086.9 664.5)" fill="url(#f311)" stroke="#ceb690" stroke-width=".7" stroke-opacity=".55"/>
<path d="M1072.1 670.9L1104.3 656.9" stroke="#564024" stroke-width="1" opacity=".6"/>
<ellipse cx="1088.3" cy="655.2" rx="5.4" ry="2.8" transform="rotate(-54 1088.3 655.2)" fill="#ece5d4" opacity=".8"/>
<ellipse cx="1082.0" cy="657.9" rx="5.8" ry="2.7" transform="rotate(-35 1082.0 657.9)" fill="#ece5d4" opacity=".8"/>
<ellipse cx="1096.3" cy="669.1" rx="5.1" ry="3.0" transform="rotate(-24 1096.3 669.1)" fill="#ece5d4" opacity=".8"/>
<ellipse cx="1083.9" cy="629.2" rx="20.2" ry="9.0" transform="rotate(-20 1083.9 629.2)" fill="url(#f311)" stroke="#ceb690" stroke-width=".7" stroke-opacity=".55"/>
<path d="M1069.5 634.4L1101.0 623.1" stroke="#564024" stroke-width="1" opacity=".6"/>
<ellipse cx="1081.0" cy="554.0" rx="35.4" ry="16.2" transform="rotate(-30 1081.0 554.0)" fill="url(#f421)" stroke="#dac6a6" stroke-width=".7" stroke-opacity=".55"/>
<ellipse cx="1103.6" cy="556.7" rx="5.9" ry="1.9" transform="rotate(-18 1103.6 556.7)" fill="#ece5d4" opacity=".8"/>
<ellipse cx="1072.2" cy="543.4" rx="4.7" ry="2.9" transform="rotate(-31 1072.2 543.4)" fill="#ece5d4" opacity=".8"/>
<ellipse cx="1081.5" cy="569.4" rx="3.6" ry="2.2" transform="rotate(-43 1081.5 569.4)" fill="#ece5d4" opacity=".8"/>
<ellipse cx="1095.4" cy="664.5" rx="18.8" ry="8.1" transform="rotate(-24 1095.4 664.5)" fill="url(#f312)" stroke="#ceb690" stroke-width=".7" stroke-opacity=".55"/>
<path d="M1082.3 670.3L1110.8 657.7" stroke="#564024" stroke-width="1" opacity=".6"/>
<ellipse cx="1104.0" cy="682.8" rx="21.1" ry="8.2" transform="rotate(-14 1104.0 682.8)" fill="url(#f311)" stroke="#ceb690" stroke-width=".7" stroke-opacity=".55"/>
<path d="M1088.4 686.7L1122.4 678.1" stroke="#564024" stroke-width="1" opacity=".6"/>
<ellipse cx="1093.5" cy="608.5" rx="27.8" ry="15.7" transform="rotate(-24 1093.5 608.5)" fill="url(#f421)" stroke="#dac6a6" stroke-width=".7" stroke-opacity=".55"/>
<path d="M1074.1 617.0L1116.4 598.5" stroke="#62503a" stroke-width="1" opacity=".6"/>
<ellipse cx="1081.1" cy="599.6" rx="5.0" ry="2.8" transform="rotate(-52 1081.1 599.6)" fill="#ece5d4" opacity=".8"/>
<ellipse cx="1082.1" cy="599.1" rx="4.6" ry="2.8" transform="rotate(-36 1082.1 599.1)" fill="#ece5d4" opacity=".8"/>
<ellipse cx="1101.8" cy="590.5" rx="4.3" ry="2.5" transform="rotate(-32 1101.8 590.5)" fill="#ece5d4" opacity=".8"/>
<ellipse cx="1090.2" cy="584.5" rx="29.6" ry="14.5" transform="rotate(-32 1090.2 584.5)" fill="url(#f421)" stroke="#dac6a6" stroke-width=".7" stroke-opacity=".55"/>
<path d="M1071.1 596.3L1112.9 570.4" stroke="#62503a" stroke-width="1" opacity=".6"/>
<ellipse cx="1097.1" cy="648.5" rx="18.9" ry="8.3" transform="rotate(-20 1097.1 648.5)" fill="url(#f212)" stroke="#c0aa86" stroke-width=".7" stroke-opacity=".55"/>
<path d="M1083.5 653.4L1113.1 642.8" stroke="#48341a" stroke-width="1" opacity=".6"/>
<ellipse cx="1103.4" cy="638.8" rx="4.1" ry="2.9" transform="rotate(6 1103.4 638.8)" fill="#ece5d4" opacity=".8"/>
<ellipse cx="1094.7" cy="656.8" rx="4.3" ry="2.3" transform="rotate(-23 1094.7 656.8)" fill="#ece5d4" opacity=".8"/>
<ellipse cx="1095.4" cy="656.5" rx="3.3" ry="2.3" transform="rotate(-50 1095.4 656.5)" fill="#ece5d4" opacity=".8"/>
<ellipse cx="1089.8" cy="564.6" rx="31.3" ry="14.1" transform="rotate(-28 1089.8 564.6)" fill="url(#f501)" stroke="#e2d4ba" stroke-width=".7" stroke-opacity=".55"/>
<path d="M1068.7 575.7L1114.6 551.5" stroke="#6a5e4e" stroke-width="1" opacity=".6"/>
<ellipse cx="1088.2" cy="552.0" rx="5.0" ry="2.5" transform="rotate(-26 1088.2 552.0)" fill="#ece5d4" opacity=".8"/>
<ellipse cx="1079.8" cy="556.5" rx="5.1" ry="1.6" transform="rotate(-20 1079.8 556.5)" fill="#ece5d4" opacity=".8"/>
<ellipse cx="1092.4" cy="576.6" rx="4.0" ry="1.9" transform="rotate(-41 1092.4 576.6)" fill="#ece5d4" opacity=".8"/>
<ellipse cx="1087.0" cy="548.8" rx="30.0" ry="14.8" transform="rotate(-27 1087.0 548.8)" fill="url(#f411)" stroke="#dac6a6" stroke-width=".7" stroke-opacity=".55"/>
<path d="M1066.7 559.2L1111.1 536.5" stroke="#62503a" stroke-width="1" opacity=".6"/>
<ellipse cx="1067.6" cy="544.9" rx="4.8" ry="3.0" transform="rotate(-24 1067.6 544.9)" fill="#ece5d4" opacity=".8"/>
<ellipse cx="1108.3" cy="551.9" rx="3.1" ry="2.8" transform="rotate(3 1108.3 551.9)" fill="#ece5d4" opacity=".8"/>
<ellipse cx="1117.3" cy="683.8" rx="19.1" ry="8.7" transform="rotate(-14 1117.3 683.8)" fill="url(#f302)" stroke="#ceb690" stroke-width=".7" stroke-opacity=".55"/>
<path d="M1103.2 687.2L1133.9 679.8" stroke="#564024" stroke-width="1" opacity=".6"/>
<ellipse cx="1111.2" cy="692.7" rx="3.7" ry="1.7" transform="rotate(-12 1111.2 692.7)" fill="#ece5d4" opacity=".8"/>
<ellipse cx="1111.9" cy="692.6" rx="5.8" ry="3.0" transform="rotate(-3 1111.9 692.6)" fill="#ece5d4" opacity=".8"/>
<ellipse cx="1117.2" cy="676.3" rx="4.3" ry="1.8" transform="rotate(-23 1117.2 676.3)" fill="#ece5d4" opacity=".8"/>
<ellipse cx="1103.8" cy="628.7" rx="17.6" ry="8.6" transform="rotate(-21 1103.8 628.7)" fill="url(#f222)" stroke="#c0aa86" stroke-width=".7" stroke-opacity=".55"/>
<path d="M1091.2 633.5L1118.6 623.2" stroke="#48341a" stroke-width="1" opacity=".6"/>
<ellipse cx="1113.9" cy="600.9" rx="33.8" ry="13.6" transform="rotate(-31 1113.9 600.9)" fill="url(#f411)" stroke="#dac6a6" stroke-width=".7" stroke-opacity=".55"/>
<ellipse cx="1113.6" cy="661.5" rx="17.2" ry="8.2" transform="rotate(-18 1113.6 661.5)" fill="url(#f302)" stroke="#ceb690" stroke-width=".7" stroke-opacity=".55"/>
<path d="M1101.1 665.6L1128.3 656.6" stroke="#564024" stroke-width="1" opacity=".6"/>
<ellipse cx="1119.4" cy="652.3" rx="5.2" ry="2.1" transform="rotate(2 1119.4 652.3)" fill="#ece5d4" opacity=".8"/>
<ellipse cx="1122.6" cy="665.7" rx="4.5" ry="2.1" transform="rotate(-35 1122.6 665.7)" fill="#ece5d4" opacity=".8"/>
<ellipse cx="1112.0" cy="580.5" rx="32.9" ry="16.4" transform="rotate(-33 1112.0 580.5)" fill="url(#f411)" stroke="#dac6a6" stroke-width=".7" stroke-opacity=".55"/>
<path d="M1091.0 594.1L1136.9 564.5" stroke="#62503a" stroke-width="1" opacity=".6"/>
<ellipse cx="1116.7" cy="637.2" rx="17.7" ry="9.6" transform="rotate(-20 1116.7 637.2)" fill="url(#f302)" stroke="#ceb690" stroke-width=".7" stroke-opacity=".55"/>
<path d="M1104.0 641.7L1131.6 631.8" stroke="#564024" stroke-width="1" opacity=".6"/>
<ellipse cx="1127.6" cy="641.8" rx="5.3" ry="2.5" transform="rotate(-22 1127.6 641.8)" fill="#ece5d4" opacity=".8"/>
<ellipse cx="1109.9" cy="562.3" rx="29.2" ry="15.8" transform="rotate(-34 1109.9 562.3)" fill="url(#f521)" stroke="#e2d4ba" stroke-width=".7" stroke-opacity=".55"/>
<ellipse cx="1091.3" cy="558.9" rx="4.1" ry="2.0" transform="rotate(-53 1091.3 558.9)" fill="#ece5d4" opacity=".8"/>
<ellipse cx="1107.5" cy="580.0" rx="3.8" ry="2.7" transform="rotate(-35 1107.5 580.0)" fill="#ece5d4" opacity=".8"/>
<ellipse cx="1127.6" cy="611.5" rx="31.0" ry="13.3" transform="rotate(-22 1127.6 611.5)" fill="url(#f301)" stroke="#ceb690" stroke-width=".7" stroke-opacity=".55"/>
<path d="M1105.8 620.3L1153.5 601.0" stroke="#564024" stroke-width="1" opacity=".6"/>
<ellipse cx="1136.6" cy="619.8" rx="5.9" ry="1.7" transform="rotate(-47 1136.6 619.8)" fill="#ece5d4" opacity=".8"/>
<ellipse cx="1108.8" cy="544.0" rx="29.9" ry="13.3" transform="rotate(-31 1108.8 544.0)" fill="url(#f421)" stroke="#dac6a6" stroke-width=".7" stroke-opacity=".55"/>
<path d="M1089.4 555.8L1131.9 530.1" stroke="#62503a" stroke-width="1" opacity=".6"/>
<ellipse cx="1128.4" cy="545.3" rx="6.0" ry="2.0" transform="rotate(-21 1128.4 545.3)" fill="#ece5d4" opacity=".8"/>
<ellipse cx="1138.4" cy="670.2" rx="19.3" ry="9.6" transform="rotate(-19 1138.4 670.2)" fill="url(#f302)" stroke="#ceb690" stroke-width=".7" stroke-opacity=".55"/>
<path d="M1124.5 675.0L1154.8 664.5" stroke="#564024" stroke-width="1" opacity=".6"/>
<ellipse cx="1119.0" cy="567.5" rx="24.8" ry="13.3" transform="rotate(-27 1119.0 567.5)" fill="url(#f421)" stroke="#dac6a6" stroke-width=".7" stroke-opacity=".55"/>
<path d="M1102.2 576.2L1138.8 557.3" stroke="#62503a" stroke-width="1" opacity=".6"/>
<ellipse cx="1129.1" cy="574.9" rx="5.1" ry="2.7" transform="rotate(-3 1129.1 574.9)" fill="#ece5d4" opacity=".8"/>
<ellipse cx="1133.8" cy="572.5" rx="5.8" ry="2.6" transform="rotate(-0 1133.8 572.5)" fill="#ece5d4" opacity=".8"/>
<ellipse cx="1103.6" cy="562.9" rx="5.0" ry="2.7" transform="rotate(-14 1103.6 562.9)" fill="#ece5d4" opacity=".8"/>
<ellipse cx="1133.9" cy="586.9" rx="31.8" ry="13.7" transform="rotate(-27 1133.9 586.9)" fill="url(#f511)" stroke="#e2d4ba" stroke-width=".7" stroke-opacity=".55"/>
<path d="M1112.3 597.8L1159.4 574.1" stroke="#6a5e4e" stroke-width="1" opacity=".6"/>
<ellipse cx="1112.7" cy="549.7" rx="15.4" ry="8.1" transform="rotate(-31 1112.7 549.7)" fill="url(#f512)" stroke="#e2d4ba" stroke-width=".7" stroke-opacity=".55"/>
<path d="M1102.7 555.7L1124.6 542.6" stroke="#6a5e4e" stroke-width="1" opacity=".6"/>
<ellipse cx="1142.3" cy="644.3" rx="20.4" ry="8.9" transform="rotate(-21 1142.3 644.3)" fill="url(#f221)" stroke="#c0aa86" stroke-width=".7" stroke-opacity=".55"/>
<path d="M1127.8 649.7L1159.5 637.8" stroke="#48341a" stroke-width="1" opacity=".6"/>
<ellipse cx="1135.4" cy="638.9" rx="5.9" ry="2.5" transform="rotate(-23 1135.4 638.9)" fill="#ece5d4" opacity=".8"/>
<ellipse cx="1141.1" cy="636.7" rx="3.8" ry="1.7" transform="rotate(-48 1141.1 636.7)" fill="#ece5d4" opacity=".8"/>
<ellipse cx="1135.0" cy="623.3" rx="18.3" ry="8.8" transform="rotate(-23 1135.0 623.3)" fill="url(#f322)" stroke="#ceb690" stroke-width=".7" stroke-opacity=".55"/>
<ellipse cx="1147.8" cy="625.8" rx="5.6" ry="1.7" transform="rotate(-16 1147.8 625.8)" fill="#ece5d4" opacity=".8"/>
<ellipse cx="1134.4" cy="631.6" rx="3.4" ry="2.9" transform="rotate(-22 1134.4 631.6)" fill="#ece5d4" opacity=".8"/>
<ellipse cx="1150.0" cy="594.8" rx="31.5" ry="14.1" transform="rotate(-31 1150.0 594.8)" fill="url(#f511)" stroke="#e2d4ba" stroke-width=".7" stroke-opacity=".55"/>
<path d="M1129.6 607.3L1174.2 580.0" stroke="#6a5e4e" stroke-width="1" opacity=".6"/>
<ellipse cx="1143.7" cy="584.8" rx="4.0" ry="1.8" transform="rotate(-9 1143.7 584.8)" fill="#ece5d4" opacity=".8"/>
<ellipse cx="1156.9" cy="661.9" rx="20.7" ry="8.8" transform="rotate(-27 1156.9 661.9)" fill="url(#f301)" stroke="#ceb690" stroke-width=".7" stroke-opacity=".55"/>
<path d="M1142.8 669.0L1173.5 653.5" stroke="#564024" stroke-width="1" opacity=".6"/>
<ellipse cx="1153.9" cy="671.6" rx="5.1" ry="2.0" transform="rotate(-62 1153.9 671.6)" fill="#ece5d4" opacity=".8"/>
<ellipse cx="1131.7" cy="559.9" rx="18.8" ry="9.2" transform="rotate(-29 1131.7 559.9)" fill="url(#f512)" stroke="#e2d4ba" stroke-width=".7" stroke-opacity=".55"/>
<path d="M1119.2 566.9L1146.4 551.7" stroke="#6a5e4e" stroke-width="1" opacity=".6"/>
<ellipse cx="1151.5" cy="642.1" rx="17.2" ry="8.6" transform="rotate(-26 1151.5 642.1)" fill="url(#f222)" stroke="#c0aa86" stroke-width=".7" stroke-opacity=".55"/>
<path d="M1139.8 647.9L1165.5 635.3" stroke="#48341a" stroke-width="1" opacity=".6"/>
<ellipse cx="1149.7" cy="651.0" rx="4.8" ry="2.9" transform="rotate(-19 1149.7 651.0)" fill="#ece5d4" opacity=".8"/>
<ellipse cx="1145.0" cy="576.2" rx="27.7" ry="16.4" transform="rotate(-33 1145.0 576.2)" fill="url(#f511)" stroke="#e2d4ba" stroke-width=".7" stroke-opacity=".55"/>
<path d="M1127.3 587.7L1166.0 562.7" stroke="#6a5e4e" stroke-width="1" opacity=".6"/>
<ellipse cx="1127.4" cy="571.3" rx="4.2" ry="1.7" transform="rotate(-56 1127.4 571.3)" fill="#ece5d4" opacity=".8"/>
<ellipse cx="1148.6" cy="590.4" rx="5.0" ry="2.3" transform="rotate(-11 1148.6 590.4)" fill="#ece5d4" opacity=".8"/>
<ellipse cx="1151.3" cy="620.3" rx="18.2" ry="10.0" transform="rotate(-27 1151.3 620.3)" fill="url(#f312)" stroke="#ceb690" stroke-width=".7" stroke-opacity=".55"/>
<path d="M1139.0 626.6L1165.9 612.7" stroke="#564024" stroke-width="1" opacity=".6"/>
<ellipse cx="1166.0" cy="596.7" rx="30.0" ry="13.1" transform="rotate(-29 1166.0 596.7)" fill="url(#f501)" stroke="#e2d4ba" stroke-width=".7" stroke-opacity=".55"/>
<ellipse cx="1168.2" cy="582.8" rx="3.6" ry="2.7" transform="rotate(-27 1168.2 582.8)" fill="#ece5d4" opacity=".8"/>
<ellipse cx="1185.0" cy="598.7" rx="4.0" ry="2.9" transform="rotate(-35 1185.0 598.7)" fill="#ece5d4" opacity=".8"/>
<ellipse cx="1158.1" cy="613.6" rx="4.2" ry="1.8" transform="rotate(-16 1158.1 613.6)" fill="#ece5d4" opacity=".8"/>
<ellipse cx="1162.0" cy="577.9" rx="26.6" ry="14.5" transform="rotate(-27 1162.0 577.9)" fill="url(#f411)" stroke="#dac6a6" stroke-width=".7" stroke-opacity=".55"/>
<path d="M1144.0 587.2L1183.2 566.9" stroke="#62503a" stroke-width="1" opacity=".6"/>
<ellipse cx="1149.7" cy="554.5" rx="19.3" ry="8.9" transform="rotate(-38 1149.7 554.5)" fill="url(#f522)" stroke="#e2d4ba" stroke-width=".7" stroke-opacity=".55"/>
<path d="M1138.2 563.7L1163.3 543.7" stroke="#6a5e4e" stroke-width="1" opacity=".6"/>
<ellipse cx="1146.8" cy="547.3" rx="5.9" ry="1.9" transform="rotate(-10 1146.8 547.3)" fill="#ece5d4" opacity=".8"/>
<ellipse cx="1178.3" cy="663.9" rx="17.8" ry="9.9" transform="rotate(-20 1178.3 663.9)" fill="url(#f312)" stroke="#ceb690" stroke-width=".7" stroke-opacity=".55"/>
<path d="M1165.6 668.6L1193.3 658.3" stroke="#564024" stroke-width="1" opacity=".6"/>
<ellipse cx="1174.9" cy="641.4" rx="16.6" ry="8.3" transform="rotate(-22 1174.9 641.4)" fill="url(#f322)" stroke="#ceb690" stroke-width=".7" stroke-opacity=".55"/>
<path d="M1163.2 646.1L1188.8 635.9" stroke="#564024" stroke-width="1" opacity=".6"/>
<ellipse cx="1174.0" cy="634.3" rx="3.0" ry="2.2" transform="rotate(-43 1174.0 634.3)" fill="#ece5d4" opacity=".8"/>
<ellipse cx="1176.6" cy="590.3" rx="27.3" ry="12.7" transform="rotate(-35 1176.6 590.3)" fill="url(#f511)" stroke="#e2d4ba" stroke-width=".7" stroke-opacity=".55"/>
<path d="M1159.5 602.1L1196.8 576.3" stroke="#6a5e4e" stroke-width="1" opacity=".6"/>
<ellipse cx="1159.0" cy="589.5" rx="5.0" ry="2.0" transform="rotate(-29 1159.0 589.5)" fill="#ece5d4" opacity=".8"/>
<ellipse cx="1171.2" cy="581.0" rx="4.9" ry="2.4" transform="rotate(-12 1171.2 581.0)" fill="#ece5d4" opacity=".8"/>
<ellipse cx="1177.1" cy="619.4" rx="17.3" ry="8.8" transform="rotate(-28 1177.1 619.4)" fill="url(#f202)" stroke="#c0aa86" stroke-width=".7" stroke-opacity=".55"/>
<path d="M1165.5 625.6L1190.8 612.0" stroke="#48341a" stroke-width="1" opacity=".6"/>
<ellipse cx="1190.9" cy="657.2" rx="17.0" ry="7.4" transform="rotate(-24 1190.9 657.2)" fill="url(#f312)" stroke="#ceb690" stroke-width=".7" stroke-opacity=".55"/>
<path d="M1179.1 662.5L1204.8 651.0" stroke="#564024" stroke-width="1" opacity=".6"/>
<ellipse cx="1186.2" cy="637.9" rx="14.9" ry="9.3" transform="rotate(-31 1186.2 637.9)" fill="url(#f322)" stroke="#ceb690" stroke-width=".7" stroke-opacity=".55"/>
<ellipse cx="1186.3" cy="628.8" rx="4.4" ry="2.0" transform="rotate(-40 1186.3 628.8)" fill="#ece5d4" opacity=".8"/>
<ellipse cx="1184.1" cy="568.1" rx="30.5" ry="15.1" transform="rotate(-34 1184.1 568.1)" fill="url(#f521)" stroke="#e2d4ba" stroke-width=".7" stroke-opacity=".55"/>
<path d="M1164.9 581.0L1206.9 552.8" stroke="#6a5e4e" stroke-width="1" opacity=".6"/>
<ellipse cx="1191.6" cy="547.8" rx="5.6" ry="1.8" transform="rotate(-27 1191.6 547.8)" fill="#ece5d4" opacity=".8"/>
<ellipse cx="1184.0" cy="617.7" rx="15.0" ry="7.8" transform="rotate(-29 1184.0 617.7)" fill="url(#f302)" stroke="#ceb690" stroke-width=".7" stroke-opacity=".55"/>
<path d="M1174.0 623.2L1195.8 611.2" stroke="#564024" stroke-width="1" opacity=".6"/>
<ellipse cx="1180.5" cy="612.1" rx="3.7" ry="2.4" transform="rotate(-34 1180.5 612.1)" fill="#ece5d4" opacity=".8"/>
<ellipse cx="1187.0" cy="608.5" rx="4.2" ry="2.8" transform="rotate(-52 1187.0 608.5)" fill="#ece5d4" opacity=".8"/>
<ellipse cx="1187.7" cy="623.1" rx="3.8" ry="1.9" transform="rotate(-18 1187.7 623.1)" fill="#ece5d4" opacity=".8"/>
<ellipse cx="1176.1" cy="558.2" rx="20.0" ry="11.0" transform="rotate(-32 1176.1 558.2)" fill="url(#f511)" stroke="#e2d4ba" stroke-width=".7" stroke-opacity=".55"/>
<path d="M1163.1 566.1L1191.4 548.7" stroke="#6a5e4e" stroke-width="1" opacity=".6"/>
<ellipse cx="1180.7" cy="566.1" rx="3.2" ry="3.0" transform="rotate(-0 1180.7 566.1)" fill="#ece5d4" opacity=".8"/>
<ellipse cx="1203.1" cy="664.0" rx="14.1" ry="7.6" transform="rotate(-24 1203.1 664.0)" fill="url(#f312)" stroke="#ceb690" stroke-width=".7" stroke-opacity=".55"/>
<ellipse cx="1204.0" cy="647.5" rx="16.4" ry="6.9" transform="rotate(-30 1204.0 647.5)" fill="url(#f322)" stroke="#ceb690" stroke-width=".7" stroke-opacity=".55"/>
<ellipse cx="1202.7" cy="654.9" rx="3.8" ry="2.8" transform="rotate(1 1202.7 654.9)" fill="#ece5d4" opacity=".8"/>
<ellipse cx="1205.3" cy="589.3" rx="30.0" ry="11.9" transform="rotate(-30 1205.3 589.3)" fill="url(#f511)" stroke="#e2d4ba" stroke-width=".7" stroke-opacity=".55"/>
<path d="M1185.5 600.7L1228.7 575.7" stroke="#6a5e4e" stroke-width="1" opacity=".6"/>
<ellipse cx="1200.4" cy="630.4" rx="14.0" ry="7.6" transform="rotate(-30 1200.4 630.4)" fill="url(#f312)" stroke="#ceb690" stroke-width=".7" stroke-opacity=".55"/>
<ellipse cx="1198.6" cy="638.8" rx="4.9" ry="1.9" transform="rotate(-19 1198.6 638.8)" fill="#ece5d4" opacity=".8"/>
<ellipse cx="1203.7" cy="621.1" rx="3.8" ry="2.2" transform="rotate(-39 1203.7 621.1)" fill="#ece5d4" opacity=".8"/>
<ellipse cx="1198.4" cy="624.1" rx="5.1" ry="2.6" transform="rotate(-24 1198.4 624.1)" fill="#ece5d4" opacity=".8"/>
<ellipse cx="1186.6" cy="554.9" rx="18.3" ry="8.2" transform="rotate(-31 1186.6 554.9)" fill="url(#f502)" stroke="#e2d4ba" stroke-width=".7" stroke-opacity=".55"/>
<ellipse cx="1203.4" cy="615.0" rx="16.8" ry="7.4" transform="rotate(-25 1203.4 615.0)" fill="url(#f322)" stroke="#ceb690" stroke-width=".7" stroke-opacity=".55"/>
<path d="M1191.9 620.5L1217.1 608.5" stroke="#564024" stroke-width="1" opacity=".6"/>
<ellipse cx="1202.4" cy="573.0" rx="26.1" ry="12.0" transform="rotate(-32 1202.4 573.0)" fill="url(#f411)" stroke="#dac6a6" stroke-width=".7" stroke-opacity=".55"/>
<ellipse cx="1221.0" cy="573.3" rx="5.9" ry="1.7" transform="rotate(-62 1221.0 573.3)" fill="#ece5d4" opacity=".8"/>
<ellipse cx="1216.1" cy="649.5" rx="13.8" ry="8.0" transform="rotate(-28 1216.1 649.5)" fill="url(#f312)" stroke="#ceb690" stroke-width=".7" stroke-opacity=".55"/>
<ellipse cx="1214.7" cy="657.7" rx="5.3" ry="2.0" transform="rotate(5 1214.7 657.7)" fill="#ece5d4" opacity=".8"/>
<ellipse cx="1206.8" cy="646.8" rx="3.5" ry="2.5" transform="rotate(-53 1206.8 646.8)" fill="#ece5d4" opacity=".8"/>
<ellipse cx="1212.8" cy="595.6" rx="23.5" ry="11.3" transform="rotate(-27 1212.8 595.6)" fill="url(#f511)" stroke="#e2d4ba" stroke-width=".7" stroke-opacity=".55"/>
<path d="M1196.9 603.7L1231.7 586.1" stroke="#6a5e4e" stroke-width="1" opacity=".6"/>
<ellipse cx="1213.9" cy="577.7" rx="26.6" ry="13.9" transform="rotate(-31 1213.9 577.7)" fill="url(#f521)" stroke="#e2d4ba" stroke-width=".7" stroke-opacity=".55"/>
<path d="M1196.6 588.2L1234.4 565.4" stroke="#6a5e4e" stroke-width="1" opacity=".6"/>
<ellipse cx="1206.1" cy="568.8" rx="3.4" ry="3.0" transform="rotate(-40 1206.1 568.8)" fill="#ece5d4" opacity=".8"/>
<ellipse cx="1217.0" cy="562.2" rx="3.8" ry="1.8" transform="rotate(-41 1217.0 562.2)" fill="#ece5d4" opacity=".8"/>
<ellipse cx="1205.5" cy="563.3" rx="21.0" ry="10.3" transform="rotate(-40 1205.5 563.3)" fill="url(#f521)" stroke="#e2d4ba" stroke-width=".7" stroke-opacity=".55"/>
<path d="M1193.3 573.6L1219.8 551.0" stroke="#6a5e4e" stroke-width="1" opacity=".6"/>
<ellipse cx="1203.0" cy="576.7" rx="3.5" ry="2.1" transform="rotate(-71 1203.0 576.7)" fill="#ece5d4" opacity=".8"/>
<ellipse cx="1214.1" cy="567.3" rx="3.3" ry="2.8" transform="rotate(-55 1214.1 567.3)" fill="#ece5d4" opacity=".8"/>
<ellipse cx="1219.3" cy="633.9" rx="15.2" ry="7.4" transform="rotate(-31 1219.3 633.9)" fill="url(#f222)" stroke="#c0aa86" stroke-width=".7" stroke-opacity=".55"/>
<path d="M1209.3 639.8L1231.0 626.9" stroke="#48341a" stroke-width="1" opacity=".6"/>
<ellipse cx="1227.7" cy="636.1" rx="4.0" ry="1.9" transform="rotate(-22 1227.7 636.1)" fill="#ece5d4" opacity=".8"/>
<ellipse cx="1223.3" cy="638.7" rx="3.5" ry="1.7" transform="rotate(-12 1223.3 638.7)" fill="#ece5d4" opacity=".8"/>
<ellipse cx="1199.6" cy="549.9" rx="13.9" ry="6.4" transform="rotate(-36 1199.6 549.9)" fill="url(#f512)" stroke="#e2d4ba" stroke-width=".7" stroke-opacity=".55"/>
<ellipse cx="1215.6" cy="615.5" rx="13.2" ry="6.9" transform="rotate(-33 1215.6 615.5)" fill="url(#f212)" stroke="#c0aa86" stroke-width=".7" stroke-opacity=".55"/>
<ellipse cx="1208.3" cy="613.4" rx="5.1" ry="1.8" transform="rotate(-38 1208.3 613.4)" fill="#ece5d4" opacity=".8"/>
<ellipse cx="1229.9" cy="659.0" rx="11.5" ry="7.0" transform="rotate(-14 1229.9 659.0)" fill="url(#f312)" stroke="#ceb690" stroke-width=".7" stroke-opacity=".55"/>
<ellipse cx="1229.9" cy="598.0" rx="21.8" ry="12.7" transform="rotate(-28 1229.9 598.0)" fill="url(#f501)" stroke="#e2d4ba" stroke-width=".7" stroke-opacity=".55"/>
<ellipse cx="1227.0" cy="587.4" rx="5.3" ry="3.0" transform="rotate(-48 1227.0 587.4)" fill="#ece5d4" opacity=".8"/>
<ellipse cx="1239.6" cy="604.9" rx="4.9" ry="3.0" transform="rotate(-20 1239.6 604.9)" fill="#ece5d4" opacity=".8"/>
<ellipse cx="1229.9" cy="576.1" rx="24.9" ry="12.3" transform="rotate(-33 1229.9 576.1)" fill="url(#f501)" stroke="#e2d4ba" stroke-width=".7" stroke-opacity=".55"/>
<path d="M1214.1 586.4L1248.6 563.8" stroke="#6a5e4e" stroke-width="1" opacity=".6"/>
<ellipse cx="1232.8" cy="561.9" rx="5.2" ry="2.2" transform="rotate(-45 1232.8 561.9)" fill="#ece5d4" opacity=".8"/>
<ellipse cx="1215.7" cy="573.0" rx="5.3" ry="2.6" transform="rotate(-37 1215.7 573.0)" fill="#ece5d4" opacity=".8"/>
<ellipse cx="1238.8" cy="582.5" rx="4.5" ry="1.7" transform="rotate(-58 1238.8 582.5)" fill="#ece5d4" opacity=".8"/>
<ellipse cx="1235.1" cy="624.0" rx="13.8" ry="7.6" transform="rotate(-25 1235.1 624.0)" fill="url(#f302)" stroke="#ceb690" stroke-width=".7" stroke-opacity=".55"/>
<ellipse cx="1238.9" cy="642.1" rx="11.7" ry="7.4" transform="rotate(-21 1238.9 642.1)" fill="url(#f202)" stroke="#c0aa86" stroke-width=".7" stroke-opacity=".55"/>
<ellipse cx="1240.2" cy="648.3" rx="3.7" ry="2.9" transform="rotate(4 1240.2 648.3)" fill="#ece5d4" opacity=".8"/>
<ellipse cx="1243.5" cy="647.0" rx="4.3" ry="2.3" transform="rotate(-29 1243.5 647.0)" fill="#ece5d4" opacity=".8"/>
<ellipse cx="1225.3" cy="560.2" rx="17.4" ry="8.4" transform="rotate(-34 1225.3 560.2)" fill="url(#f512)" stroke="#e2d4ba" stroke-width=".7" stroke-opacity=".55"/>
<path d="M1214.3 567.6L1238.3 551.4" stroke="#6a5e4e" stroke-width="1" opacity=".6"/>
<ellipse cx="1221.1" cy="571.6" rx="4.0" ry="2.8" transform="rotate(-3 1221.1 571.6)" fill="#ece5d4" opacity=".8"/>
<ellipse cx="1243.2" cy="605.9" rx="19.9" ry="12.2" transform="rotate(-32 1243.2 605.9)" fill="url(#f422)" stroke="#dac6a6" stroke-width=".7" stroke-opacity=".55"/>
<path d="M1230.3 613.8L1258.5 596.5" stroke="#62503a" stroke-width="1" opacity=".6"/>
<ellipse cx="1255.9" cy="610.1" rx="3.7" ry="2.7" transform="rotate(-39 1255.9 610.1)" fill="#ece5d4" opacity=".8"/>
<ellipse cx="1242.1" cy="618.6" rx="4.7" ry="1.9" transform="rotate(-4 1242.1 618.6)" fill="#ece5d4" opacity=".8"/>
<ellipse cx="1237.6" cy="597.2" rx="6.0" ry="2.1" transform="rotate(-29 1237.6 597.2)" fill="#ece5d4" opacity=".8"/>
<ellipse cx="1235.4" cy="571.1" rx="19.8" ry="10.3" transform="rotate(-31 1235.4 571.1)" fill="url(#f512)" stroke="#e2d4ba" stroke-width=".7" stroke-opacity=".55"/>
<path d="M1222.5 578.8L1250.8 562.0" stroke="#6a5e4e" stroke-width="1" opacity=".6"/>
<ellipse cx="1243.9" cy="576.2" rx="4.1" ry="3.0" transform="rotate(-26 1243.9 576.2)" fill="#ece5d4" opacity=".8"/>
<ellipse cx="1224.7" cy="567.5" rx="4.1" ry="2.7" transform="rotate(-39 1224.7 567.5)" fill="#ece5d4" opacity=".8"/>
<ellipse cx="1246.5" cy="574.6" rx="5.6" ry="1.6" transform="rotate(-44 1246.5 574.6)" fill="#ece5d4" opacity=".8"/>
<ellipse cx="1241.9" cy="584.0" rx="21.9" ry="10.9" transform="rotate(-33 1241.9 584.0)" fill="url(#f511)" stroke="#e2d4ba" stroke-width=".7" stroke-opacity=".55"/>
<path d="M1228.0 593.2L1258.4 573.2" stroke="#6a5e4e" stroke-width="1" opacity=".6"/>
<ellipse cx="1244.6" cy="571.3" rx="4.7" ry="2.9" transform="rotate(1 1244.6 571.3)" fill="#ece5d4" opacity=".8"/>
<ellipse cx="1247.5" cy="591.3" rx="5.0" ry="2.7" transform="rotate(-19 1247.5 591.3)" fill="#ece5d4" opacity=".8"/>
<ellipse cx="1245.0" cy="627.9" rx="12.3" ry="7.0" transform="rotate(-27 1245.0 627.9)" fill="url(#f322)" stroke="#ceb690" stroke-width=".7" stroke-opacity=".55"/>
<ellipse cx="1251.6" cy="644.4" rx="12.2" ry="7.0" transform="rotate(-22 1251.6 644.4)" fill="url(#f302)" stroke="#ceb690" stroke-width=".7" stroke-opacity=".55"/>
<ellipse cx="1251.6" cy="650.8" rx="3.6" ry="2.8" transform="rotate(-55 1251.6 650.8)" fill="#ece5d4" opacity=".8"/>
<ellipse cx="1253.4" cy="650.0" rx="5.5" ry="2.3" transform="rotate(-29 1253.4 650.0)" fill="#ece5d4" opacity=".8"/>
<ellipse cx="1254.5" cy="637.0" rx="3.8" ry="2.0" transform="rotate(-26 1254.5 637.0)" fill="#ece5d4" opacity=".8"/>
<ellipse cx="1247.4" cy="615.7" rx="12.6" ry="6.4" transform="rotate(-28 1247.4 615.7)" fill="url(#f312)" stroke="#ceb690" stroke-width=".7" stroke-opacity=".55"/>
<ellipse cx="1243.6" cy="623.9" rx="4.8" ry="2.2" transform="rotate(-26 1243.6 623.9)" fill="#ece5d4" opacity=".8"/>
<ellipse cx="1232.6" cy="562.1" rx="10.3" ry="5.3" transform="rotate(-37 1232.6 562.1)" fill="url(#f512)" stroke="#e2d4ba" stroke-width=".7" stroke-opacity=".55"/>
<ellipse cx="1238.3" cy="563.4" rx="5.2" ry="1.7" transform="rotate(-58 1238.3 563.4)" fill="#ece5d4" opacity=".8"/>
<ellipse cx="1253.9" cy="598.5" rx="20.3" ry="11.2" transform="rotate(-21 1253.9 598.5)" fill="url(#f611)" stroke="#eee2cc" stroke-width=".7" stroke-opacity=".55"/>
<path d="M1239.4 604.0L1271.0 592.0" stroke="#766c60" stroke-width="1" opacity=".6"/>
<ellipse cx="1256.9" cy="636.9" rx="9.4" ry="5.7" transform="rotate(-24 1256.9 636.9)" fill="url(#f402)" stroke="#dac6a6" stroke-width=".7" stroke-opacity=".55"/>
<ellipse cx="1261.6" cy="640.0" rx="5.6" ry="2.9" transform="rotate(7 1261.6 640.0)" fill="#ece5d4" opacity=".8"/>
<ellipse cx="1262.7" cy="651.9" rx="10.0" ry="6.6" transform="rotate(-14 1262.7 651.9)" fill="url(#f412)" stroke="#dac6a6" stroke-width=".7" stroke-opacity=".55"/>
<ellipse cx="1268.5" cy="656.1" rx="3.7" ry="1.9" transform="rotate(-18 1268.5 656.1)" fill="#ece5d4" opacity=".8"/>
<ellipse cx="1255.1" cy="580.1" rx="19.9" ry="9.6" transform="rotate(-31 1255.1 580.1)" fill="url(#f522)" stroke="#e2d4ba" stroke-width=".7" stroke-opacity=".55"/>
<path d="M1242.1 587.8L1270.6 571.0" stroke="#6a5e4e" stroke-width="1" opacity=".6"/>
<ellipse cx="1243.3" cy="577.7" rx="5.8" ry="2.9" transform="rotate(-9 1243.3 577.7)" fill="#ece5d4" opacity=".8"/>
<ellipse cx="1251.9" cy="591.5" rx="4.6" ry="1.9" transform="rotate(-43 1251.9 591.5)" fill="#ece5d4" opacity=".8"/>
<ellipse cx="1259.8" cy="568.0" rx="3.1" ry="2.5" transform="rotate(4 1259.8 568.0)" fill="#ece5d4" opacity=".8"/>
<ellipse cx="1263.3" cy="623.3" rx="10.7" ry="6.2" transform="rotate(-23 1263.3 623.3)" fill="url(#f522)" stroke="#e2d4ba" stroke-width=".7" stroke-opacity=".55"/>
<ellipse cx="1251.3" cy="570.6" rx="12.1" ry="6.7" transform="rotate(-32 1251.3 570.6)" fill="url(#f512)" stroke="#e2d4ba" stroke-width=".7" stroke-opacity=".55"/>
<ellipse cx="1245.9" cy="567.3" rx="5.3" ry="2.6" transform="rotate(-17 1245.9 567.3)" fill="#ece5d4" opacity=".8"/>
<ellipse cx="1250.7" cy="577.7" rx="5.7" ry="2.8" transform="rotate(-56 1250.7 577.7)" fill="#ece5d4" opacity=".8"/>
<ellipse cx="1267.9" cy="635.7" rx="9.5" ry="5.8" transform="rotate(-15 1267.9 635.7)" fill="url(#f512)" stroke="#e2d4ba" stroke-width=".7" stroke-opacity=".55"/>
<ellipse cx="1265.1" cy="591.9" rx="17.7" ry="9.3" transform="rotate(-26 1265.1 591.9)" fill="url(#f522)" stroke="#e2d4ba" stroke-width=".7" stroke-opacity=".55"/>
<path d="M1253.1 597.9L1279.4 584.9" stroke="#6a5e4e" stroke-width="1" opacity=".6"/>
<ellipse cx="1271.4" cy="597.6" rx="5.1" ry="2.2" transform="rotate(-32 1271.4 597.6)" fill="#ece5d4" opacity=".8"/>
<ellipse cx="1270.3" cy="610.8" rx="17.6" ry="10.0" transform="rotate(-19 1270.3 610.8)" fill="url(#f402)" stroke="#dac6a6" stroke-width=".7" stroke-opacity=".55"/>
<path d="M1257.6 615.1L1285.4 605.7" stroke="#62503a" stroke-width="1" opacity=".6"/>
<ellipse cx="1259.1" cy="605.7" rx="3.4" ry="2.4" transform="rotate(-5 1259.1 605.7)" fill="#ece5d4" opacity=".8"/>
<ellipse cx="1261.9" cy="604.8" rx="4.9" ry="2.2" transform="rotate(-26 1261.9 604.8)" fill="#ece5d4" opacity=".8"/>
<ellipse cx="1282.4" cy="615.5" rx="3.5" ry="2.7" transform="rotate(-9 1282.4 615.5)" fill="#ece5d4" opacity=".8"/>
<ellipse cx="1259.6" cy="580.8" rx="14.1" ry="7.4" transform="rotate(-30 1259.6 580.8)" fill="url(#f412)" stroke="#dac6a6" stroke-width=".7" stroke-opacity=".55"/>
<ellipse cx="1259.8" cy="587.8" rx="4.8" ry="1.7" transform="rotate(-1 1259.8 587.8)" fill="#ece5d4" opacity=".8"/>
<ellipse cx="1269.4" cy="582.4" rx="3.9" ry="2.6" transform="rotate(-57 1269.4 582.4)" fill="#ece5d4" opacity=".8"/>
<ellipse cx="1263.3" cy="585.8" rx="5.9" ry="2.9" transform="rotate(-50 1263.3 585.8)" fill="#ece5d4" opacity=".8"/>
<ellipse cx="1274.9" cy="647.4" rx="8.9" ry="5.2" transform="rotate(-19 1274.9 647.4)" fill="url(#f412)" stroke="#dac6a6" stroke-width=".7" stroke-opacity=".55"/>
<ellipse cx="1277.5" cy="641.9" rx="3.1" ry="1.7" transform="rotate(-5 1277.5 641.9)" fill="#ece5d4" opacity=".8"/>
<ellipse cx="1274.1" cy="622.5" rx="10.3" ry="5.7" transform="rotate(-15 1274.1 622.5)" fill="url(#f412)" stroke="#dac6a6" stroke-width=".7" stroke-opacity=".55"/>
<ellipse cx="1269.4" cy="628.6" rx="3.2" ry="2.4" transform="rotate(-50 1269.4 628.6)" fill="#ece5d4" opacity=".8"/>
<ellipse cx="1275.2" cy="611.8" rx="13.3" ry="8.6" transform="rotate(-23 1275.2 611.8)" fill="url(#f412)" stroke="#dac6a6" stroke-width=".7" stroke-opacity=".55"/>
<ellipse cx="1274.8" cy="596.4" rx="16.6" ry="8.3" transform="rotate(-24 1274.8 596.4)" fill="url(#f412)" stroke="#dac6a6" stroke-width=".7" stroke-opacity=".55"/>
<path d="M1263.3 601.6L1288.4 590.2" stroke="#62503a" stroke-width="1" opacity=".6"/>
<ellipse cx="1271.4" cy="605.5" rx="5.8" ry="2.5" transform="rotate(-45 1271.4 605.5)" fill="#ece5d4" opacity=".8"/>
<ellipse cx="1277.3" cy="602.9" rx="4.4" ry="2.5" transform="rotate(-30 1277.3 602.9)" fill="#ece5d4" opacity=".8"/>
<ellipse cx="1259.7" cy="570.8" rx="7.4" ry="4.8" transform="rotate(-32 1259.7 570.8)" fill="url(#f412)" stroke="#dac6a6" stroke-width=".7" stroke-opacity=".55"/>
<ellipse cx="1257.6" cy="567.3" rx="5.3" ry="2.7" transform="rotate(-1 1257.6 567.3)" fill="#ece5d4" opacity=".8"/>
<ellipse cx="1259.9" cy="565.9" rx="4.5" ry="1.6" transform="rotate(-42 1259.9 565.9)" fill="#ece5d4" opacity=".8"/>
<ellipse cx="1283.0" cy="644.2" rx="9.4" ry="4.9" transform="rotate(-10 1283.0 644.2)" fill="url(#f522)" stroke="#e2d4ba" stroke-width=".7" stroke-opacity=".55"/>
<ellipse cx="1284.7" cy="648.1" rx="5.4" ry="2.6" transform="rotate(-7 1284.7 648.1)" fill="#ece5d4" opacity=".8"/>
<ellipse cx="1283.8" cy="648.3" rx="4.0" ry="2.5" transform="rotate(-31 1283.8 648.3)" fill="#ece5d4" opacity=".8"/>
<ellipse cx="1278.3" cy="621.3" rx="8.6" ry="4.7" transform="rotate(-18 1278.3 621.3)" fill="url(#f422)" stroke="#dac6a6" stroke-width=".7" stroke-opacity=".55"/>
<ellipse cx="1275.8" cy="626.2" rx="4.9" ry="3.0" transform="rotate(-25 1275.8 626.2)" fill="#ece5d4" opacity=".8"/>
<ellipse cx="1283.4" cy="633.4" rx="8.8" ry="5.4" transform="rotate(-14 1283.4 633.4)" fill="url(#f412)" stroke="#dac6a6" stroke-width=".7" stroke-opacity=".55"/>
<ellipse cx="1287.4" cy="637.1" rx="5.4" ry="1.9" transform="rotate(-27 1287.4 637.1)" fill="#ece5d4" opacity=".8"/>
<ellipse cx="1286.0" cy="609.3" rx="15.1" ry="7.6" transform="rotate(-19 1286.0 609.3)" fill="url(#f422)" stroke="#dac6a6" stroke-width=".7" stroke-opacity=".55"/>
<path d="M1275.1 613.1L1298.8 604.8" stroke="#62503a" stroke-width="1" opacity=".6"/>
<ellipse cx="1286.3" cy="602.5" rx="4.7" ry="1.6" transform="rotate(-7 1286.3 602.5)" fill="#ece5d4" opacity=".8"/>
<ellipse cx="1288.7" cy="615.1" rx="5.6" ry="2.1" transform="rotate(-52 1288.7 615.1)" fill="#ece5d4" opacity=".8"/>
<ellipse cx="1283.4" cy="603.5" rx="3.6" ry="2.9" transform="rotate(-49 1283.4 603.5)" fill="#ece5d4" opacity=".8"/>
<ellipse cx="1279.7" cy="586.9" rx="14.4" ry="8.3" transform="rotate(-25 1279.7 586.9)" fill="url(#f512)" stroke="#e2d4ba" stroke-width=".7" stroke-opacity=".55"/>
<ellipse cx="1282.1" cy="578.1" rx="3.3" ry="2.4" transform="rotate(-48 1282.1 578.1)" fill="#ece5d4" opacity=".8"/>
<ellipse cx="1289.1" cy="590.2" rx="4.9" ry="1.7" transform="rotate(6 1289.1 590.2)" fill="#ece5d4" opacity=".8"/>
<ellipse cx="1287.7" cy="645.2" rx="7.7" ry="4.6" transform="rotate(-12 1287.7 645.2)" fill="url(#f522)" stroke="#e2d4ba" stroke-width=".7" stroke-opacity=".55"/>
<ellipse cx="1271.4" cy="572.9" rx="8.0" ry="4.6" transform="rotate(-34 1271.4 572.9)" fill="url(#f412)" stroke="#dac6a6" stroke-width=".7" stroke-opacity=".55"/>
<ellipse cx="1281.3" cy="586.8" rx="12.9" ry="7.9" transform="rotate(-25 1281.3 586.8)" fill="url(#f502)" stroke="#e2d4ba" stroke-width=".7" stroke-opacity=".55"/>
<ellipse cx="1278.1" cy="580.9" rx="4.2" ry="1.8" transform="rotate(-19 1278.1 580.9)" fill="#ece5d4" opacity=".8"/>
<ellipse cx="1285.6" cy="600.0" rx="13.7" ry="9.1" transform="rotate(-24 1285.6 600.0)" fill="url(#f512)" stroke="#e2d4ba" stroke-width=".7" stroke-opacity=".55"/>
<ellipse cx="1284.1" cy="609.0" rx="6.0" ry="2.4" transform="rotate(7 1284.1 609.0)" fill="#ece5d4" opacity=".8"/>
<ellipse cx="1288.7" cy="631.6" rx="7.5" ry="5.0" transform="rotate(-15 1288.7 631.6)" fill="url(#f522)" stroke="#e2d4ba" stroke-width=".7" stroke-opacity=".55"/>
<ellipse cx="1292.4" cy="627.0" rx="6.9" ry="4.3" transform="rotate(-10 1292.4 627.0)" fill="url(#f412)" stroke="#dac6a6" stroke-width=".7" stroke-opacity=".55"/>
<ellipse cx="1296.0" cy="643.1" rx="6.5" ry="4.6" transform="rotate(-9 1296.0 643.1)" fill="url(#f502)" stroke="#e2d4ba" stroke-width=".7" stroke-opacity=".55"/>
<ellipse cx="1291.3" cy="600.6" rx="11.1" ry="8.1" transform="rotate(-19 1291.3 600.6)" fill="url(#f522)" stroke="#e2d4ba" stroke-width=".7" stroke-opacity=".55"/>
<ellipse cx="1283.8" cy="579.6" rx="7.0" ry="4.4" transform="rotate(-32 1283.8 579.6)" fill="url(#f502)" stroke="#e2d4ba" stroke-width=".7" stroke-opacity=".55"/>
<ellipse cx="1300.0" cy="614.1" rx="12.9" ry="8.5" transform="rotate(-15 1300.0 614.1)" fill="url(#f412)" stroke="#dac6a6" stroke-width=".7" stroke-opacity=".55"/>
<ellipse cx="1292.9" cy="593.6" rx="10.0" ry="6.1" transform="rotate(-28 1292.9 593.6)" fill="url(#f512)" stroke="#e2d4ba" stroke-width=".7" stroke-opacity=".55"/>
<ellipse cx="1301.4" cy="633.5" rx="6.7" ry="4.8" transform="rotate(-13 1301.4 633.5)" fill="url(#f512)" stroke="#e2d4ba" stroke-width=".7" stroke-opacity=".55"/>
<ellipse cx="1299.6" cy="623.2" rx="7.0" ry="4.7" transform="rotate(-16 1299.6 623.2)" fill="url(#f422)" stroke="#dac6a6" stroke-width=".7" stroke-opacity=".55"/>
<ellipse cx="1300.7" cy="608.5" rx="10.8" ry="7.6" transform="rotate(-16 1300.7 608.5)" fill="url(#f502)" stroke="#e2d4ba" stroke-width=".7" stroke-opacity=".55"/>
<ellipse cx="1291.2" cy="586.5" rx="5.7" ry="4.0" transform="rotate(-20 1291.2 586.5)" fill="url(#f412)" stroke="#dac6a6" stroke-width=".7" stroke-opacity=".55"/>
<ellipse cx="1308.4" cy="614.5" rx="10.3" ry="6.0" transform="rotate(-9 1308.4 614.5)" fill="url(#f402)" stroke="#dac6a6" stroke-width=".7" stroke-opacity=".55"/>
<ellipse cx="1309.3" cy="621.4" rx="6.6" ry="3.8" transform="rotate(-11 1309.3 621.4)" fill="url(#f502)" stroke="#e2d4ba" stroke-width=".7" stroke-opacity=".55"/>
<ellipse cx="1314.3" cy="641.2" rx="6.6" ry="3.8" transform="rotate(-2 1314.3 641.2)" fill="url(#f502)" stroke="#e2d4ba" stroke-width=".7" stroke-opacity=".55"/>
<ellipse cx="1309.0" cy="599.7" rx="11.4" ry="7.2" transform="rotate(-24 1309.0 599.7)" fill="url(#f502)" stroke="#e2d4ba" stroke-width=".7" stroke-opacity=".55"/>
<ellipse cx="1300.4" cy="587.3" rx="5.9" ry="3.6" transform="rotate(-23 1300.4 587.3)" fill="url(#f412)" stroke="#dac6a6" stroke-width=".7" stroke-opacity=".55"/>
<ellipse cx="1314.4" cy="630.9" rx="6.5" ry="3.8" transform="rotate(-8 1314.4 630.9)" fill="url(#f512)" stroke="#e2d4ba" stroke-width=".7" stroke-opacity=".55"/>
<ellipse cx="1311.0" cy="604.0" rx="9.1" ry="6.3" transform="rotate(-10 1311.0 604.0)" fill="url(#f522)" stroke="#e2d4ba" stroke-width=".7" stroke-opacity=".55"/>
<ellipse cx="1305.8" cy="591.9" rx="5.3" ry="3.8" transform="rotate(-23 1305.8 591.9)" fill="url(#f422)" stroke="#dac6a6" stroke-width=".7" stroke-opacity=".55"/>
<ellipse cx="1320.1" cy="633.5" rx="5.7" ry="4.3" transform="rotate(0 1320.1 633.5)" fill="url(#f412)" stroke="#dac6a6" stroke-width=".7" stroke-opacity=".55"/>
<ellipse cx="1322.4" cy="641.2" rx="5.8" ry="4.0" transform="rotate(5 1322.4 641.2)" fill="url(#f512)" stroke="#e2d4ba" stroke-width=".7" stroke-opacity=".55"/>
<ellipse cx="1323.0" cy="639.5" rx="6.5" ry="4.3" transform="rotate(-1 1323.0 639.5)" fill="url(#f522)" stroke="#e2d4ba" stroke-width=".7" stroke-opacity=".55"/>
<ellipse cx="1323.5" cy="630.1" rx="6.3" ry="4.3" transform="rotate(-8 1323.5 630.1)" fill="url(#f502)" stroke="#e2d4ba" stroke-width=".7" stroke-opacity=".55"/>
<ellipse cx="1321.7" cy="609.1" rx="8.9" ry="7.0" transform="rotate(-17 1321.7 609.1)" fill="url(#f522)" stroke="#e2d4ba" stroke-width=".7" stroke-opacity=".55"/>
<ellipse cx="1326.7" cy="619.8" rx="11.1" ry="6.3" transform="rotate(-4 1326.7 619.8)" fill="url(#f412)" stroke="#dac6a6" stroke-width=".7" stroke-opacity=".55"/>
<ellipse cx="1319.6" cy="599.0" rx="5.1" ry="3.6" transform="rotate(-16 1319.6 599.0)" fill="url(#f412)" stroke="#dac6a6" stroke-width=".7" stroke-opacity=".55"/>
<ellipse cx="1328.8" cy="615.4" rx="9.2" ry="6.9" transform="rotate(-12 1328.8 615.4)" fill="url(#f512)" stroke="#e2d4ba" stroke-width=".7" stroke-opacity=".55"/>
<ellipse cx="1324.7" cy="606.6" rx="4.9" ry="2.8" transform="rotate(-14 1324.7 606.6)" fill="url(#f502)" stroke="#e2d4ba" stroke-width=".7" stroke-opacity=".55"/>
<ellipse cx="1333.4" cy="618.2" rx="8.5" ry="6.3" transform="rotate(-6 1333.4 618.2)" fill="url(#f512)" stroke="#e2d4ba" stroke-width=".7" stroke-opacity=".55"/>
<ellipse cx="1336.5" cy="630.1" rx="5.6" ry="4.1" transform="rotate(-2 1336.5 630.1)" fill="url(#f522)" stroke="#e2d4ba" stroke-width=".7" stroke-opacity=".55"/>
<ellipse cx="1340.4" cy="628.8" rx="8.8" ry="5.5" transform="rotate(-3 1340.4 628.8)" fill="url(#f502)" stroke="#e2d4ba" stroke-width=".7" stroke-opacity=".55"/>
<ellipse cx="1346.2" cy="590.2" rx="4.4" ry="3.2" transform="rotate(7 1346.2 590.2)" fill="url(#f522)" stroke="#e2d4ba" stroke-width=".7" stroke-opacity=".55"/>
<ellipse cx="1349.1" cy="601.1" rx="4.8" ry="3.4" transform="rotate(16 1349.1 601.1)" fill="url(#f502)" stroke="#e2d4ba" stroke-width=".7" stroke-opacity=".55"/>
<ellipse cx="1348.4" cy="584.7" rx="4.4" ry="3.4" transform="rotate(9 1348.4 584.7)" fill="url(#f502)" stroke="#e2d4ba" stroke-width=".7" stroke-opacity=".55"/>
<ellipse cx="1348.7" cy="568.4" rx="8.1" ry="4.7" transform="rotate(1 1348.7 568.4)" fill="url(#f502)" stroke="#e2d4ba" stroke-width=".7" stroke-opacity=".55"/>
<ellipse cx="1351.1" cy="590.2" rx="4.9" ry="3.4" transform="rotate(6 1351.1 590.2)" fill="url(#f502)" stroke="#e2d4ba" stroke-width=".7" stroke-opacity=".55"/>
<ellipse cx="1353.8" cy="594.9" rx="4.4" ry="3.2" transform="rotate(5 1353.8 594.9)" fill="url(#f512)" stroke="#e2d4ba" stroke-width=".7" stroke-opacity=".55"/>
<ellipse cx="1353.6" cy="575.4" rx="8.6" ry="5.3" transform="rotate(-3 1353.6 575.4)" fill="url(#f522)" stroke="#e2d4ba" stroke-width=".7" stroke-opacity=".55"/>
<ellipse cx="1347.2" cy="559.2" rx="4.5" ry="2.5" transform="rotate(-2 1347.2 559.2)" fill="url(#f512)" stroke="#e2d4ba" stroke-width=".7" stroke-opacity=".55"/>
<ellipse cx="1356.2" cy="581.5" rx="7.5" ry="5.4" transform="rotate(10 1356.2 581.5)" fill="url(#f512)" stroke="#e2d4ba" stroke-width=".7" stroke-opacity=".55"/>
<ellipse cx="1362.0" cy="569.9" rx="7.8" ry="5.7" transform="rotate(-3 1362.0 569.9)" fill="url(#f522)" stroke="#e2d4ba" stroke-width=".7" stroke-opacity=".55"/>
<ellipse cx="1360.6" cy="565.6" rx="6.4" ry="3.7" transform="rotate(5 1360.6 565.6)" fill="url(#f512)" stroke="#e2d4ba" stroke-width=".7" stroke-opacity=".55"/>
  </g>
  <g filter="url(#fWingN)" opacity=".3"><rect x="660" y="540" width="700" height="180" fill="#000"/></g>
  <!-- primaries dark -->
  <path d="M676 566 L700 582 L751 601.5 L806 622.5 L862 642.5 L917 660 L946 674 L938 662 L862 634 L790 607 L730 584 L690 566Z" fill="#43331f" opacity=".9"/>
  <path d="M677 564 L686 558 L760 570 L840 578 L800 582 L740 580 L700 574Z" fill="#2e2318" opacity=".55" filter="url(#fSoft2)"/>
  <path d="M694 570 L760 596 L860 634 L938 662 L936 659 L860 631 L760 593Z" fill="#cdbf9e" opacity=".5"/>
 </g>
 <!-- soft wing lower edge shadow -->
 <path d="M946 676 L1010 699 L1040 702 L1139 689 L1216 679 L1216 684 L1139 695 L1040 708 L1005 704 Z" fill="#7a705e" opacity=".35" filter="url(#fSoft2)"/>
</g>
<!-- eye -->
<ellipse cx="1444" cy="614" rx="18" ry="16.5" fill="#ece9df" opacity=".9" filter="url(#fB1)"/>
<ellipse cx="1444" cy="614" rx="13.6" ry="12.4" fill="#120d0a"/>
<ellipse cx="1444.5" cy="615" rx="9" ry="8.4" fill="#1c130d"/>
<circle cx="1444.5" cy="615" r="5.6" fill="#050505"/>
<circle cx="1442" cy="610.5" r="1.6" fill="#f4f4f4"/>
<!-- beak -->
<defs>
 <linearGradient id="gBkU" x1="1496" y1="664" x2="1632" y2="798" gradientUnits="userSpaceOnUse"><stop offset="0" stop-color="#8b8848"/><stop offset=".16" stop-color="#6a683a"/><stop offset=".34" stop-color="#3c3b2c"/><stop offset=".8" stop-color="#2b2a24"/><stop offset="1" stop-color="#151515"/></linearGradient>
 <linearGradient id="gBkL" x1="1488" y1="682" x2="1630" y2="799" gradientUnits="userSpaceOnUse"><stop offset="0" stop-color="#968a46"/><stop offset=".25" stop-color="#7c6e32"/><stop offset=".55" stop-color="#5c4f29"/><stop offset=".8" stop-color="#373122"/><stop offset="1" stop-color="#1a1a18"/></linearGradient>
</defs>
<path d="M1484 683 L1490.5 673.5 L1521.5 700.5 L1565 737.5 L1603 770.5 L1622.5 787 L1633.5 797 L1631 799.5 L1625 796 L1607 787 L1588 770.5 L1560 747.5 L1540 730 L1513 708.5 L1496 692 Z" fill="url(#gBkL)"/>
<path d="M1497 659 L1501 661 L1530 691.5 L1549 710 L1572.5 730 L1592 748 L1610 764 L1627 782.5 L1633.5 797 L1622.5 787 L1603 770.5 L1565 737.5 L1521.5 700.5 L1490.5 673.5 Z" fill="url(#gBkU)"/>
<path d="M1490.5 673.5 L1521.5 700.5 L1565 737.5 L1603 770.5 L1622.5 787" fill="none" stroke="#1c1c16" stroke-width="1.5" opacity=".85"/>
<path d="M1541 722 L1570 747 L1600 772.5" fill="none" stroke="#d8c090" stroke-width="3" opacity=".8" stroke-linecap="round"/>
<path d="M1508 679 L1518 688" stroke="#1a1a14" stroke-width="3" stroke-linecap="round" opacity=".8"/>
<path d="M1488 682 L1500 692 L1516 708" stroke="#b3a85c" stroke-width="2" opacity=".6" fill="none"/>
<path d="M1607 778 L1629 795" stroke="#d7dde6" stroke-width="2.2" opacity=".75" stroke-linecap="round"/>
<circle cx="1631.5" cy="796.5" r="1.8" fill="#e6ebf2" opacity=".9"/>
<!-- legs -->
<defs>
 <linearGradient id="gLegR" x1="0" y1="806" x2="0" y2="875" gradientUnits="userSpaceOnUse"><stop offset="0" stop-color="#6e5116"/><stop offset=".3" stop-color="#a98219"/><stop offset=".6" stop-color="#c9a22c"/><stop offset="1" stop-color="#b48a1c"/></linearGradient>
 <linearGradient id="gLegL" x1="0" y1="803" x2="0" y2="878" gradientUnits="userSpaceOnUse"><stop offset="0" stop-color="#b08a20"/><stop offset=".5" stop-color="#c8a02b"/><stop offset="1" stop-color="#ae8418"/></linearGradient>
 <clipPath id="cWater"><path d="M651 867.6 L700 867.2 L777 868 L900 869.4 L1036 871.6 L1063 873.4 L1126 872 L1240 873.6 L1349 878 L1472 880 L1593 881.7 L1654 883.9 L1684 885.7 L1714 885.6 L1714 887.2 L1684 886.9 L1654 887.8 L1593 889.3 L1472 890.8 L1352 892.6 L1240 893 L1157 891.4 L1151 883 L1126 877.4 L1063 876.4 L1036 877.5 L1025 881.6 L970 884.6 L928 885.9 L901 883 L860 877.8 L805 877.8 L777 881.8 L708 879.2 L667 873.6 Z"/></clipPath>
</defs>
<path d="M1099 850 L1102 852 L1101 872 L1089 873Z" fill="#5a4a2a" opacity=".8"/>
<path d="M1075 803 L1092 808 L1062 869 L1061 878 L1032 878 L1042 866 Z" fill="url(#gLegL)"/>
<path d="M1116 806 L1134 808 L1122 866 L1126 875 L1092 875 L1100 858 Z" fill="url(#gLegR)"/>
<path d="M1080 806 L1047 868 M1123 810 L1108 866" stroke="#8a6510" stroke-width="2" opacity=".45"/>
<path d="M1087 808 L1056 868 M1129 812 L1116 866" stroke="#e8cc66" stroke-width="1.6" opacity=".5"/>
<!-- water -->
<g filter="url(#fRough2)">
 <g clip-path="url(#cWater)">
  <rect x="640" y="860" width="1090" height="40" fill="#1a2b54"/>
  <path d="M651 866 L1720 884 L1720 880 L651 864Z" fill="#111d3a" opacity=".7"/>
<path d="M665 869.7Q674 869.4 682 870.7Q693 869.5 704 870.1Q715 870.1 727 871.1Q738 870.5 749 870.4Q758 870.8 767 871.0Q778 871.7 789 870.8Q800 871.7 810 871.8Q819 871.6 828 870.2Q842 871.0 856 871.1Q864 871.2 872 872.1Q880 872.2 889 872.7Q897 872.5 905 872.5Q918 871.8 931 871.5Q943 871.1 955 873.3Q965 874.3 975 873.2Q986 872.0 996 873.2Q1008 872.7 1019 874.0" fill="none" stroke="#7d9ad0" stroke-width="1.4" opacity=".68"/>
<path d="M679 872.2Q689 873.3 699 872.0Q710 873.1 722 871.2Q734 870.7 746 872.7Q760 872.1 774 872.1Q783 872.6 791 872.8Q803 873.9 815 873.0Q825 872.7 835 872.2Q849 871.9 862 872.4Q873 871.5 883 873.6Q892 874.4 900 874.2Q913 873.9 926 873.9Q937 874.8 949 874.6Q963 874.3 976 874.2Q986 875.1 995 873.8Q1003 874.2 1010 874.1" fill="none" stroke="#7d9ad0" stroke-width="1.0" opacity=".68"/>
<path d="M693 873.4Q705 874.0 717 874.7Q731 875.5 745 874.3Q754 873.7 763 874.2Q773 874.9 783 875.6Q797 874.6 812 874.7Q822 875.5 832 875.6Q841 876.7 849 875.9Q859 876.3 869 875.4Q883 874.6 896 876.4Q906 876.4 916 876.3Q927 876.6 939 877.6Q947 877.1 954 876.4Q966 876.0 978 876.5Q990 876.9 1001 876.4" fill="none" stroke="#4a6cb0" stroke-width="1.4" opacity=".68"/>
<path d="M707 875.1Q717 874.9 727 875.9Q740 875.7 753 876.5Q766 876.3 780 876.1Q790 877.2 800 877.5Q813 876.7 827 877.4Q836 876.2 845 876.8Q856 877.8 867 877.2Q880 878.1 893 879.1Q902 880.2 911 877.9Q924 877.8 937 879.1Q950 880.2 963 878.7Q972 879.7 981 878.7Q993 878.1 1006 879.0" fill="none" stroke="#5f82c0" stroke-width="1.5" opacity=".68"/>
<path d="M721 879.4Q732 878.4 744 879.5Q757 878.8 770 879.8Q784 878.9 799 878.3Q808 879.3 817 878.4Q830 877.5 843 879.8Q852 879.2 861 880.9Q872 880.4 882 879.2Q893 880.1 904 879.6Q915 878.7 926 880.2Q934 881.2 942 881.1Q950 881.1 958 882.2Q966 882.4 975 880.5Q989 880.3 1003 881.9" fill="none" stroke="#4a6cb0" stroke-width="1.5" opacity=".68"/>
<path d="M1135 874.5Q1148 873.5 1161 875.3Q1174 875.1 1187 876.5Q1196 876.4 1205 875.3Q1215 876.1 1225 875.8Q1235 876.8 1245 878.0Q1260 877.8 1276 876.6Q1289 877.5 1302 877.6Q1314 878.3 1325 878.1Q1339 877.6 1354 879.1Q1366 879.1 1377 878.7Q1389 877.9 1401 879.0Q1414 879.7 1428 880.8Q1440 881.1 1452 879.8Q1462 880.7 1473 880.8Q1487 881.5 1500 882.2Q1512 882.6 1525 882.7Q1539 883.2 1552 882.4Q1564 882.5 1576 883.0Q1591 882.1 1606 883.3Q1620 883.5 1635 884.0Q1646 882.9 1657 884.5" fill="none" stroke="#7d9ad0" stroke-width="1.0" opacity=".68"/>
<path d="M1145 876.6Q1155 876.4 1165 877.0Q1181 877.6 1197 877.7Q1206 876.9 1215 879.4Q1225 879.8 1235 879.7Q1250 880.3 1264 880.2Q1280 880.5 1297 880.1Q1312 880.1 1328 879.4Q1343 879.3 1358 880.9Q1373 881.2 1387 880.4Q1402 881.3 1417 882.7Q1427 881.9 1436 881.7Q1450 880.8 1463 883.2Q1474 883.7 1485 882.1Q1496 883.0 1507 883.4Q1522 883.4 1537 883.4Q1549 883.2 1561 883.7Q1573 884.2 1585 884.1Q1595 883.4 1604 884.6" fill="none" stroke="#8fa8d6" stroke-width="1.1" opacity=".68"/>
<path d="M1155 879.4Q1168 880.3 1181 881.5Q1197 882.3 1213 881.0Q1228 881.3 1243 881.6Q1259 882.2 1275 881.8Q1288 880.9 1302 883.0Q1318 882.4 1334 881.9Q1345 881.4 1356 883.3Q1367 884.1 1378 883.0Q1389 883.6 1400 883.1Q1415 882.3 1431 883.3Q1446 883.6 1460 884.3Q1471 884.7 1482 884.3Q1498 883.3 1514 884.8Q1523 885.8 1533 885.8Q1542 885.1 1552 885.9Q1567 884.9 1582 886.1" fill="none" stroke="#7d9ad0" stroke-width="1.1" opacity=".68"/>
<path d="M1165 883.3Q1175 882.8 1185 882.1Q1200 882.6 1216 882.7Q1228 883.8 1240 883.6Q1254 883.9 1268 882.5Q1280 882.6 1292 883.7Q1305 882.8 1317 883.4Q1331 883.4 1345 885.2Q1357 884.9 1369 884.5Q1379 885.0 1389 884.1Q1403 884.5 1418 883.9Q1434 884.1 1450 885.9Q1460 885.2 1469 886.2Q1481 886.5 1494 886.0Q1509 886.3 1524 885.2Q1538 884.5 1552 886.2" fill="none" stroke="#5f82c0" stroke-width="1.7" opacity=".68"/>
<path d="M1175 885.3Q1185 885.3 1195 885.6Q1211 886.7 1227 885.9Q1242 885.1 1256 885.5Q1267 885.7 1279 885.0Q1292 885.4 1304 886.4Q1319 886.6 1334 885.0Q1344 885.9 1355 886.1Q1368 885.2 1382 885.8Q1392 886.2 1402 885.6Q1411 885.7 1421 885.3Q1433 885.7 1446 885.7Q1461 885.5 1475 886.3Q1491 887.4 1507 887.4Q1520 886.6 1532 887.2" fill="none" stroke="#9db4dc" stroke-width="1.4" opacity=".68"/>
<path d="M1185 888.7Q1198 888.9 1212 887.2Q1222 886.5 1233 888.7Q1245 889.3 1257 887.3Q1272 886.7 1288 887.6Q1300 888.2 1313 888.3Q1324 889.2 1336 888.4Q1347 889.4 1359 887.5Q1372 886.6 1385 887.8Q1401 887.4 1417 887.7Q1427 888.0 1436 886.5Q1450 885.8 1464 886.3Q1479 886.2 1494 886.5" fill="none" stroke="#8fa8d6" stroke-width="1.0" opacity=".68"/>
<path d="M1150 880.7Q1165 880.0 1180 880.8Q1191 881.6 1201 880.7Q1215 881.5 1228 881.0Q1245 880.5 1262 880.9Q1280 880.2 1298 882.3" fill="none" stroke="#b98f5e" stroke-width="1.6" opacity=".9"/>
<path d="M1155 882.3Q1166 882.6 1177 882.4Q1189 882.2 1201 882.7Q1216 882.5 1231 883.8Q1247 883.8 1262 883.5Q1278 883.7 1295 883.6Q1309 883.2 1324 884.5Q1338 883.7 1352 883.8" fill="none" stroke="#c4a074" stroke-width="1.6" opacity=".9"/>
<path d="M1160 885.2Q1172 885.6 1185 885.1Q1197 884.3 1209 885.6Q1221 885.4 1233 885.2Q1244 885.0 1256 885.6Q1271 884.9 1285 885.7Q1296 886.5 1307 886.5" fill="none" stroke="#a98458" stroke-width="1.6" opacity=".9"/>
<path d="M1165 887.2Q1178 887.3 1192 887.3Q1211 886.5 1229 888.4Q1247 888.1 1265 888.2Q1284 889.0 1304 889.5Q1321 889.2 1339 889.8" fill="none" stroke="#b98f5e" stroke-width="1.5" opacity=".9"/>
<path d="M1170 890.2Q1181 889.9 1191 889.5Q1202 890.0 1214 889.8Q1225 889.2 1235 889.8Q1252 889.6 1268 891.3Q1280 891.1 1293 891.6Q1308 891.9 1322 891.5Q1341 892.2 1360 892.0Q1371 891.4 1381 891.1Q1397 891.5 1413 892.3" fill="none" stroke="#c9ac86" stroke-width="2.1" opacity=".9"/>
<path d="M925 882.4Q940 882.1 956 881.9Q970 881.5 983 880.8Q996 881.0 1009 880.7" fill="none" stroke="#c0a57e" stroke-width="1.8" opacity=".68"/>
<path d="M925 884.6Q942 884.9 959 883.7Q974 883.9 989 882.9Q1005 882.4 1022 882.1" fill="none" stroke="#c0a57e" stroke-width="1.8" opacity=".68"/>
 </g>
</g>
<path d="M1714 886.4 L1735 882.6 L1748 879 L1757 877.2 L1760 881 L1767.3 887.8 L1760 892 L1757 898.4 L1748 893 L1735 890Z" fill="#0d1424"/>
<path d="M1740 884 L1756 882 M1742 889 L1757 892" stroke="#3a4f7c" stroke-width="1" opacity=".8"/>
<path d="M1680 886.4 L1714 886.4" stroke="#dfe6f2" stroke-width="1.3"/>
<!-- leg reflections -->
<g filter="url(#fB1)" transform="translate(0 -1.6)">
<path d="M1042 880 L1061 880 L1063 893 L1062 902 L1067 910 L1066 918 L1072 924 L1078 930 L1082 936 L1077 940 L1071 935 L1067 926 L1059 920 L1053 912 L1050 903 L1046 893Z" fill="#c8a540" opacity=".95"/>
<path d="M1070 922 L1082 936 L1077 940 L1068 930Z" fill="#dcc88e" opacity=".8"/>
<path d="M1097 879 L1124 879 L1123 893 L1125 906 L1124 918 L1128 934 L1130 947 L1124 951 L1116 950 L1113 938 L1109 922 L1106 905 L1102 892Z" fill="#b8922c" opacity=".97"/>
<path d="M1112 932 L1128 932 L1130 947 L1124 951 L1116 950Z" fill="#8c6e2a" opacity=".8"/>
<path d="M1117 946 L1129 945 L1128 950 L1120 951Z" fill="#9a9488" opacity=".8"/>
<path d="M1100 884 H1122 M1045 885 H1060 M1102 890 H1123" stroke="#ecd476" stroke-width="1" opacity=".6"/>
</g>
<!-- droplets -->
<defs>
 <linearGradient id="gDrop" x1="0" y1="0" x2="0" y2="1"><stop offset="0" stop-color="#4e5866"/><stop offset=".35" stop-color="#9aa6b6"/><stop offset=".7" stop-color="#7c8898"/><stop offset="1" stop-color="#5a6472"/></linearGradient>
 <linearGradient id="gDrop4" x1="0" y1="0" x2="0" y2="1"><stop offset="0" stop-color="#8d96a4"/><stop offset=".5" stop-color="#7f8ca2"/><stop offset=".75" stop-color="#9a8468"/><stop offset="1" stop-color="#a88c66"/></linearGradient>
 <linearGradient id="gRefl" x1="1600" y1="985" x2="1618" y2="1003" gradientUnits="userSpaceOnUse"><stop offset="0" stop-color="#5c4630"/><stop offset=".3" stop-color="#94775a"/><stop offset=".46" stop-color="#727c92"/><stop offset=".6" stop-color="#868d9e"/><stop offset=".74" stop-color="#a48a64"/><stop offset="1" stop-color="#b59a74"/></linearGradient>
</defs>
<g filter="url(#fB1)">
<path d="M1722.4 816.6 L1724.6 808 Q1727 803.6 1733 803.2 L1739 803 Q1742.6 803.6 1742.2 807.6 L1741 812.4 Q1739.6 815.4 1735 815.6 L1727.6 816 L1723.6 817.6 Z" fill="url(#gDrop)"/>
<path d="M1728 808 L1736 806 M1729 812 L1737 810" stroke="#dfe5ee" stroke-width="1" opacity=".7"/>
<path d="M1678.4 830.4 Q1678.6 827 1681.8 827 Q1685 827.2 1685.2 831 L1685 837.6 Q1684.4 841 1681.6 841 Q1678.6 840.8 1678.4 837.4 Z" fill="url(#gDrop)"/>
<path d="M1681 831 V837" stroke="#dbe2ec" stroke-width="1.2" opacity=".7"/>
<path d="M1676 936 Q1676.4 930.4 1680.2 930.2 Q1684.2 930.4 1684.6 936 L1684.4 944.6 Q1684 950.4 1680.6 950.6 Q1677 950.4 1676.2 945 Z" fill="url(#gDrop)"/>
<path d="M1679.6 935 V946" stroke="#d8dfea" stroke-width="1.3" opacity=".6"/>
<path d="M1721 955.4 L1726 957 L1737 958.4 Q1740.8 959.4 1740.8 963 L1740.4 973 Q1740 976.6 1736.4 976.4 L1730.4 975.4 Q1726.6 974 1725.6 970 L1723.6 961.4 Z" fill="url(#gDrop4)"/>
<path d="M1730.4 960 V973" stroke="#eef1f5" stroke-width="1" opacity=".8"/>
<circle cx="1791.8" cy="887.2" r="4.7" fill="#3d4148"/><path d="M1787.4 887.2h8.8" stroke="#b9bec6" stroke-width="1.2"/><path d="M1789 884.6 h5.6" stroke="#70757e" stroke-width="1"/>
<circle cx="1653" cy="956" r="2.4" fill="#d9d0bc" opacity=".75"/>
<!-- beak reflection -->
<path d="M1565 1025.4 L1568 1019 L1576 1010 L1587 1000 L1599 989 L1611 978 L1622 971.5 L1630 968 L1637 964 L1642 962.6 L1638 969 L1633 977 L1627 988 L1619 999 L1609 1009 L1596 1018 L1581 1024 L1570 1026.4 Z" fill="url(#gRefl)"/>
<path d="M1622 971.5 L1630 968 L1637 964 L1642 962.6 L1638 969 L1633 977 Z" fill="#f7f7f5" opacity=".55"/>
<path d="M1565 1025.4 L1576 1010 L1587 1000 L1580 1014 L1572 1024 Z" fill="#b8a88e" opacity=".6"/>
<path d="M1599.6 997 L1600.2 1008" stroke="#f3f3f3" stroke-width="1.3" opacity=".9"/>
</g>
</svg>
</body></html>
